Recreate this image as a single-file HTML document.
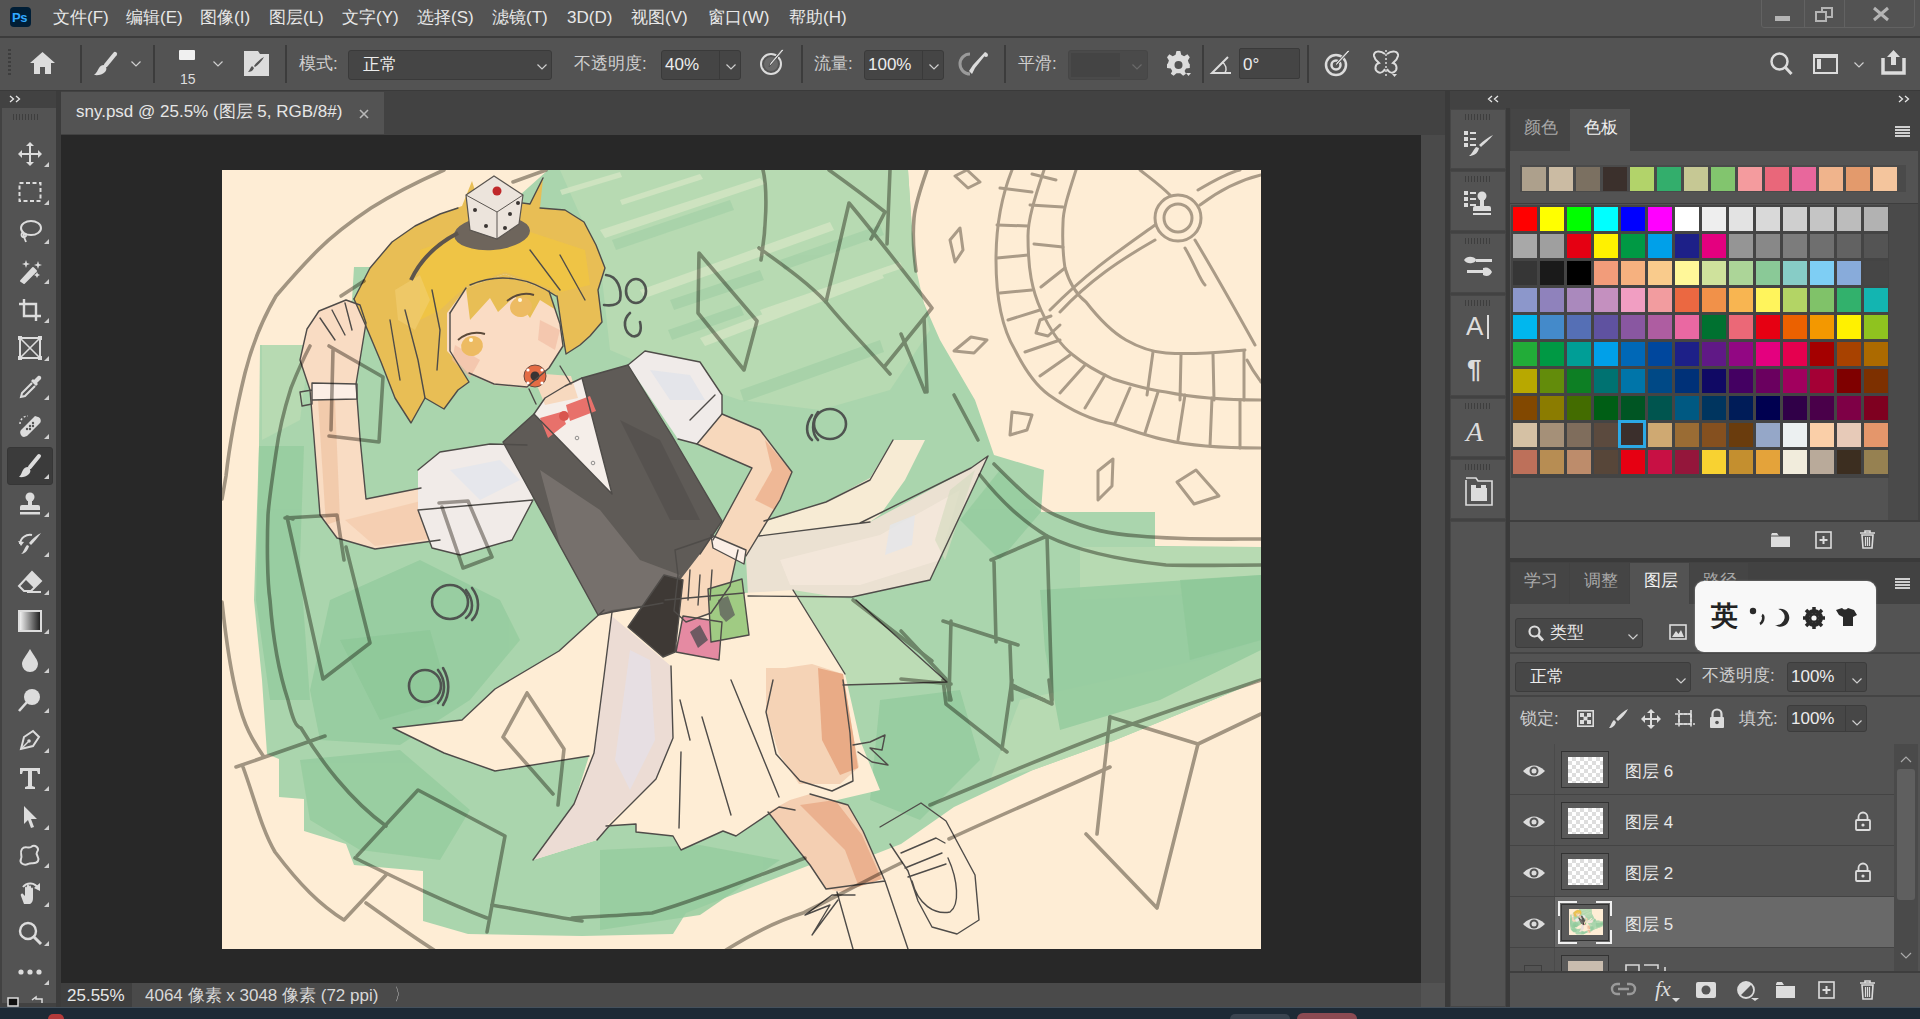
<!DOCTYPE html>
<html><head><meta charset="utf-8">
<style>
*{margin:0;padding:0;box-sizing:border-box}
html,body{width:1920px;height:1019px;overflow:hidden;background:#535353;font-family:"Liberation Sans",sans-serif;color:#d6d6d6}
.a{position:absolute}
.t{position:absolute;white-space:nowrap;line-height:1}
.ic{position:absolute;overflow:visible}
</style></head><body>

<div class="a" style="left:0px;top:0px;width:1920px;height:36px;background:#535353;"></div>
<div class="a" style="left:0px;top:36px;width:1920px;height:2px;background:#3c3c3c;"></div>
<div class="a" style="left:10px;top:7px;width:21px;height:20px;background:#001e36;border-radius:4px"></div>
<div class="t" style="left:12px;top:11px;font-size:13px;color:#31a8ff;font-weight:bold;letter-spacing:-0.3px">Ps</div>
<div class="t" style="left:53px;top:9px;font-size:17px;color:#e8e8e8;">文件(F)</div>
<div class="t" style="left:126px;top:9px;font-size:17px;color:#e8e8e8;">编辑(E)</div>
<div class="t" style="left:200px;top:9px;font-size:17px;color:#e8e8e8;">图像(I)</div>
<div class="t" style="left:269px;top:9px;font-size:17px;color:#e8e8e8;">图层(L)</div>
<div class="t" style="left:342px;top:9px;font-size:17px;color:#e8e8e8;">文字(Y)</div>
<div class="t" style="left:417px;top:9px;font-size:17px;color:#e8e8e8;">选择(S)</div>
<div class="t" style="left:492px;top:9px;font-size:17px;color:#e8e8e8;">滤镜(T)</div>
<div class="t" style="left:567px;top:9px;font-size:17px;color:#e8e8e8;">3D(D)</div>
<div class="t" style="left:631px;top:9px;font-size:17px;color:#e8e8e8;">视图(V)</div>
<div class="t" style="left:708px;top:9px;font-size:17px;color:#e8e8e8;">窗口(W)</div>
<div class="t" style="left:789px;top:9px;font-size:17px;color:#e8e8e8;">帮助(H)</div>
<div class="a" style="left:1761px;top:-4px;width:154px;height:32px;border:1px solid #626262;border-radius:3px"></div>
<div class="a" style="left:1804px;top:0px;width:1px;height:27px;background:#626262;"></div>
<div class="a" style="left:1844px;top:0px;width:1px;height:27px;background:#626262;"></div>
<div class="a" style="left:1775px;top:16px;width:15px;height:5px;background:#b4b4b4;"></div>
<div class="a" style="left:1821px;top:7px;width:12px;height:11px;border:2px solid #b4b4b4"></div>
<div class="a" style="left:1815px;top:11px;width:12px;height:11px;border:2px solid #b4b4b4;background:#535353"></div>
<svg class="ic" style="left:1872px;top:7px;" width="18" height="14" viewBox="0 0 18 14"><path d="M2 1 L16 13 M16 1 L2 13" stroke="#b4b4b4" stroke-width="3"/></svg>
<div class="a" style="left:0px;top:38px;width:1918px;height:52px;background:#535353;"></div>
<div class="a" style="left:0px;top:90px;width:1920px;height:1px;background:#3a3a3a;"></div>
<div class="a" style="left:8px;top:49px;width:3px;height:2px;background:#3e3e3e;"></div>
<div class="a" style="left:8px;top:53px;width:3px;height:2px;background:#3e3e3e;"></div>
<div class="a" style="left:8px;top:57px;width:3px;height:2px;background:#3e3e3e;"></div>
<div class="a" style="left:8px;top:61px;width:3px;height:2px;background:#3e3e3e;"></div>
<div class="a" style="left:8px;top:65px;width:3px;height:2px;background:#3e3e3e;"></div>
<div class="a" style="left:8px;top:69px;width:3px;height:2px;background:#3e3e3e;"></div>
<div class="a" style="left:8px;top:73px;width:3px;height:2px;background:#3e3e3e;"></div>
<div class="a" style="left:80px;top:45px;width:2px;height:38px;background:#3c3c3c;"></div>
<div class="a" style="left:153px;top:45px;width:2px;height:38px;background:#3c3c3c;"></div>
<div class="a" style="left:285px;top:45px;width:2px;height:38px;background:#3c3c3c;"></div>
<div class="a" style="left:801px;top:45px;width:2px;height:38px;background:#3c3c3c;"></div>
<div class="a" style="left:1004px;top:45px;width:2px;height:38px;background:#3c3c3c;"></div>
<div class="a" style="left:1202px;top:45px;width:2px;height:38px;background:#3c3c3c;"></div>
<div class="a" style="left:1307px;top:45px;width:2px;height:38px;background:#3c3c3c;"></div>
<svg class="ic" style="left:30px;top:52px;" width="25" height="22" viewBox="0 0 25 22"><path d="M12.5 0 L25 11 L21 11 L21 22 L15 22 L15 15 L10 15 L10 22 L4 22 L4 11 L0 11 Z" fill="#dcdcdc"/></svg>
<svg class="ic" style="left:94px;top:52px;" width="23" height="24" viewBox="0 0 23 24"><path d="M21 2 L12 13" stroke="#dcdcdc" stroke-width="4.2" stroke-linecap="round"/><path d="M9.5 13 C12.5 14 13.5 17.5 11 20 C8 23 4 23.5 0 23 C3 21 3.5 18 5 16 C6 14 8 13 9.5 13 Z" fill="#dcdcdc"/></svg>
<svg class="ic" style="left:131px;top:61px;" width="10" height="6" viewBox="0 0 10 6"><path d="M0.5 0.5 L5.0 5 L9.5 0.5" fill="none" stroke="#cfcfcf" stroke-width="1.2"/></svg>
<div class="a" style="left:179px;top:50px;width:16px;height:10px;background:#f0f0f0;border-radius:1px"></div>
<div class="t" style="left:180px;top:72px;font-size:14px;color:#dedede;">15</div>
<svg class="ic" style="left:213px;top:61px;" width="10" height="6" viewBox="0 0 10 6"><path d="M0.5 0.5 L5.0 5 L9.5 0.5" fill="none" stroke="#cfcfcf" stroke-width="1.2"/></svg>
<svg class="ic" style="left:244px;top:51px;" width="25" height="25" viewBox="0 0 25 25"><path d="M0 0 H14 L16 3 H25 V25 H0 Z" fill="#dcdcdc"/><path d="M20 6 C18 10 14 14 11 16 L10 15 C12 12 16 8 20 6 Z M10 17 C9 20 6 21 4 21 C6 19 6 17 8 15 Z" fill="#535353"/></svg>
<div class="t" style="left:299px;top:55px;font-size:17px;color:#cfcfcf;">模式:</div>
<div class="a" style="left:348px;top:50px;width:204px;height:30px;background:#454545;border:1px solid #3a3a3a;border-radius:3px"></div>
<div class="t" style="left:363px;top:56px;font-size:17px;color:#ececec;">正常</div>
<svg class="ic" style="left:537px;top:64px;" width="10" height="6" viewBox="0 0 10 6"><path d="M0.5 0.5 L5.0 5 L9.5 0.5" fill="none" stroke="#cfcfcf" stroke-width="1.2"/></svg>
<div class="t" style="left:574px;top:55px;font-size:17px;color:#cfcfcf;">不透明度:</div>
<div class="a" style="left:661px;top:50px;width:80px;height:30px;background:#454545;border:1px solid #3a3a3a;border-radius:3px"></div>
<div class="a" style="left:719px;top:51px;width:1px;height:28px;background:#3a3a3a;"></div>
<div class="t" style="left:665px;top:56px;font-size:17px;color:#ececec;">40%</div>
<svg class="ic" style="left:726px;top:64px;" width="10" height="6" viewBox="0 0 10 6"><path d="M0.5 0.5 L5.0 5 L9.5 0.5" fill="none" stroke="#cfcfcf" stroke-width="1.2"/></svg>
<svg class="ic" style="left:759px;top:49px;" width="27" height="27" viewBox="0 0 27 27"><circle cx="12" cy="15" r="10" fill="none" stroke="#dcdcdc" stroke-width="2"/><circle cx="12" cy="15" r="7" fill="#6a6a6a"/><path d="M25 1 L12 16 L10 18 L11 14 L23 0 Z" fill="#dcdcdc" stroke="#535353" stroke-width="1"/></svg>
<div class="t" style="left:814px;top:55px;font-size:17px;color:#cfcfcf;">流量:</div>
<div class="a" style="left:864px;top:50px;width:80px;height:30px;background:#454545;border:1px solid #3a3a3a;border-radius:3px"></div>
<div class="a" style="left:922px;top:51px;width:1px;height:28px;background:#3a3a3a;"></div>
<div class="t" style="left:868px;top:56px;font-size:17px;color:#ececec;">100%</div>
<svg class="ic" style="left:929px;top:64px;" width="10" height="6" viewBox="0 0 10 6"><path d="M0.5 0.5 L5.0 5 L9.5 0.5" fill="none" stroke="#cfcfcf" stroke-width="1.2"/></svg>
<svg class="ic" style="left:961px;top:52px;" width="28" height="24" viewBox="0 0 28 24"><path d="M9 2 A10 10 0 0 0 9 22" fill="none" stroke="#9a9a9a" stroke-width="3"/><path d="M26 1 L14 16 L11 22 L8 19 L12 13 L24 0 Z" fill="#dcdcdc"/><circle cx="25" cy="3" r="2" fill="#dcdcdc"/></svg>
<div class="t" style="left:1018px;top:55px;font-size:17px;color:#cfcfcf;">平滑:</div>
<div class="a" style="left:1068px;top:50px;width:80px;height:30px;background:#4a4a4a;border:1px solid #464646;border-radius:3px"></div>
<div class="a" style="left:1071px;top:53px;width:49px;height:24px;background:#444444;"></div>
<svg class="ic" style="left:1132px;top:64px;" width="10" height="6" viewBox="0 0 10 6"><path d="M0.5 0.5 L5.0 5 L9.5 0.5" fill="none" stroke="#6a6a6a" stroke-width="1.2"/></svg>
<svg class="ic" style="left:1167px;top:51px;" width="24" height="26" viewBox="0 0 24 26"><path d="M10 0 H14 L15 4 L18 5.5 L21.5 3.5 L24 6.5 L22 10 L23 13 L24 14 V18 L20 18.5 L18.5 21 L20 24 L17 26 L14 23.5 H10 L7 26 L4 24 L5.5 21 L4 18.5 L0 18 V14 L1 13 L2 10 L0 6.5 L2.5 3.5 L6 5.5 L9 4 Z" fill="#dcdcdc" transform="scale(0.95)"/><circle cx="11.5" cy="14" r="4" fill="#535353"/><path d="M19 22 L24 22 L21.5 25 Z" fill="#dcdcdc"/></svg>
<svg class="ic" style="left:1211px;top:54px;" width="22" height="20" viewBox="0 0 22 20"><path d="M20 19 H1 L17 3" fill="none" stroke="#dcdcdc" stroke-width="2"/><path d="M11 8 A8 8 0 0 1 14 19" fill="none" stroke="#dcdcdc" stroke-width="1.5"/></svg>
<div class="a" style="left:1239px;top:48px;width:61px;height:31px;background:#454545;border:1px solid #3a3a3a;border-radius:2px"></div>
<div class="t" style="left:1243px;top:56px;font-size:17px;color:#ececec;">0°</div>
<svg class="ic" style="left:1324px;top:50px;" width="28" height="27" viewBox="0 0 28 27"><circle cx="12" cy="15" r="10" fill="none" stroke="#dcdcdc" stroke-width="2.5"/><circle cx="12" cy="15" r="4.5" fill="none" stroke="#dcdcdc" stroke-width="2.5"/><path d="M26 1 L13 15 L11 16 L12 13 L24 0 Z" fill="#dcdcdc" stroke="#535353" stroke-width="1"/></svg>
<svg class="ic" style="left:1372px;top:50px;" width="28" height="28" viewBox="0 0 28 28"><path d="M13 4 C8 0 1 1 2 6 C3 10 5 11 7 13 C3 14 2 20 6 22 C9 24 12 21 13 19 M15 4 C20 0 27 1 26 6 C25 10 23 11 21 13 C25 14 26 20 22 22 C19 24 16 21 15 19" fill="none" stroke="#dcdcdc" stroke-width="2"/><path d="M14 0 V27" stroke="#dcdcdc" stroke-width="1.5" stroke-dasharray="2 2"/><path d="M20 24 L25 24 L22.5 27 Z" fill="#dcdcdc"/></svg>
<svg class="ic" style="left:1770px;top:52px;" width="23" height="24" viewBox="0 0 23 24"><circle cx="9.5" cy="9.5" r="8" fill="none" stroke="#dcdcdc" stroke-width="2.5"/><path d="M15 15 L21.5 22" stroke="#dcdcdc" stroke-width="3"/></svg>
<svg class="ic" style="left:1813px;top:54px;" width="25" height="20" viewBox="0 0 25 20"><rect x="1" y="1" width="23" height="18" fill="none" stroke="#dcdcdc" stroke-width="2"/><rect x="1" y="1" width="23" height="3" fill="#dcdcdc"/><rect x="4" y="5" width="4" height="10" fill="#dcdcdc"/></svg>
<svg class="ic" style="left:1854px;top:62px;" width="10" height="6" viewBox="0 0 10 6"><path d="M0.5 0.5 L5.0 5 L9.5 0.5" fill="none" stroke="#cfcfcf" stroke-width="1.2"/></svg>
<svg class="ic" style="left:1880px;top:50px;" width="27" height="25" viewBox="0 0 27 25"><path d="M3 8 V23 H24 V8" fill="none" stroke="#dcdcdc" stroke-width="3.5"/><path d="M13.5 0 L20 7 H16 V15 H11 V7 H7 Z" fill="#dcdcdc"/></svg>
<div class="a" style="left:0px;top:91px;width:1920px;height:916px;background:#424242;"></div>
<div class="a" style="left:0px;top:91px;width:57px;height:17px;background:#424242;"></div>
<div class="a" style="left:2px;top:108px;width:54px;height:895px;background:#535353;"></div>
<div class="a" style="left:56px;top:91px;width:5px;height:916px;background:#3c3c3c;"></div>
<div class="a" style="left:13px;top:114px;width:1px;height:6px;background:#3e3e3e;"></div>
<div class="a" style="left:16px;top:114px;width:1px;height:6px;background:#3e3e3e;"></div>
<div class="a" style="left:19px;top:114px;width:1px;height:6px;background:#3e3e3e;"></div>
<div class="a" style="left:22px;top:114px;width:1px;height:6px;background:#3e3e3e;"></div>
<div class="a" style="left:25px;top:114px;width:1px;height:6px;background:#3e3e3e;"></div>
<div class="a" style="left:28px;top:114px;width:1px;height:6px;background:#3e3e3e;"></div>
<div class="a" style="left:31px;top:114px;width:1px;height:6px;background:#3e3e3e;"></div>
<div class="a" style="left:34px;top:114px;width:1px;height:6px;background:#3e3e3e;"></div>
<div class="a" style="left:37px;top:114px;width:1px;height:6px;background:#3e3e3e;"></div>
<div class="a" style="left:7px;top:447px;width:46px;height:38px;background:#3b3b3b;border-radius:3px;border:1px solid #363636"></div>
<svg class="ic" style="left:18px;top:142px;" width="24" height="24" viewBox="0 0 24 24"><path d="M12 0 L16 4 H13 V11 H20 V8 L24 12 L20 16 V13 H13 V20 H16 L12 24 L8 20 H11 V13 H4 V16 L0 12 L4 8 V11 H11 V4 H8 Z" fill="#dcdcdc"/></svg>
<svg class="ic" style="left:44px;top:162px;" width="5" height="5" viewBox="0 0 5 5"><path d="M5 0 V5 H0 Z" fill="#cfcfcf"/></svg>
<svg class="ic" style="left:18px;top:180px;" width="24" height="24" viewBox="0 0 24 24"><rect x="1.5" y="3" width="21" height="18" fill="none" stroke="#dcdcdc" stroke-width="2" stroke-dasharray="4 2.5"/></svg>
<svg class="ic" style="left:44px;top:200px;" width="5" height="5" viewBox="0 0 5 5"><path d="M5 0 V5 H0 Z" fill="#cfcfcf"/></svg>
<svg class="ic" style="left:18px;top:219px;" width="24" height="24" viewBox="0 0 24 24"><ellipse cx="13" cy="9" rx="10" ry="7" fill="none" stroke="#dcdcdc" stroke-width="2"/><path d="M5 13 C2 16 4 19 7 18 C9 17 8 14 6 15 C5 17 7 20 8 23" fill="none" stroke="#dcdcdc" stroke-width="1.8"/></svg>
<svg class="ic" style="left:44px;top:239px;" width="5" height="5" viewBox="0 0 5 5"><path d="M5 0 V5 H0 Z" fill="#cfcfcf"/></svg>
<svg class="ic" style="left:18px;top:259px;" width="24" height="24" viewBox="0 0 24 24"><path d="M3 22 L15 9 L18 12 L6 24 Z" fill="#dcdcdc" stroke="#dcdcdc" stroke-width="2" stroke-linejoin="round"/><path d="M8 1 L9 4 L12 5 L9 6 L8 9 L7 6 L4 5 L7 4 Z M20 2 L21 5 L24 6 L21 7 L20 10 L19 7 L16 6 L19 5 Z M19 13 L20 15 L22 16 L20 17 L19 19 L18 17 L16 16 L18 15 Z" fill="#dcdcdc"/></svg>
<svg class="ic" style="left:44px;top:279px;" width="5" height="5" viewBox="0 0 5 5"><path d="M5 0 V5 H0 Z" fill="#cfcfcf"/></svg>
<svg class="ic" style="left:18px;top:298px;" width="24" height="24" viewBox="0 0 24 24"><path d="M6 1 V18 H23 M1 6 H18 V23" fill="none" stroke="#dcdcdc" stroke-width="2.4"/></svg>
<svg class="ic" style="left:44px;top:318px;" width="5" height="5" viewBox="0 0 5 5"><path d="M5 0 V5 H0 Z" fill="#cfcfcf"/></svg>
<svg class="ic" style="left:18px;top:336px;" width="24" height="24" viewBox="0 0 24 24"><rect x="2" y="2" width="20" height="20" fill="none" stroke="#dcdcdc" stroke-width="2"/><path d="M2 2 L22 22 M22 2 L2 22" stroke="#dcdcdc" stroke-width="1.6"/><g fill="#dcdcdc"><rect x="0" y="0" width="4" height="4"/><rect x="20" y="0" width="4" height="4"/><rect x="0" y="20" width="4" height="4"/><rect x="20" y="20" width="4" height="4"/></g></svg>
<svg class="ic" style="left:44px;top:356px;" width="5" height="5" viewBox="0 0 5 5"><path d="M5 0 V5 H0 Z" fill="#cfcfcf"/></svg>
<svg class="ic" style="left:18px;top:375px;" width="24" height="24" viewBox="0 0 24 24"><path d="M20 1 C22 0 24 2 23 4 L19 8 L20 9 L18 11 L13 6 L15 4 L16 5 Z" fill="#dcdcdc"/><path d="M14 8 L4 18 L3 22 L7 21 L17 11" fill="none" stroke="#dcdcdc" stroke-width="2"/></svg>
<svg class="ic" style="left:44px;top:395px;" width="5" height="5" viewBox="0 0 5 5"><path d="M5 0 V5 H0 Z" fill="#cfcfcf"/></svg>
<svg class="ic" style="left:18px;top:414px;" width="24" height="24" viewBox="0 0 24 24"><path d="M9 22 L22 9 C24 7 22 3 20 3 L17 2 L3 16 C1 18 3 23 6 23 Z" fill="#dcdcdc"/><g fill="#535353"><circle cx="12" cy="12" r="1.2"/><circle cx="15" cy="12" r="1.2"/><circle cx="12" cy="15" r="1.2"/><circle cx="15" cy="9" r="1.2"/><circle cx="9" cy="15" r="1.2"/></g><path d="M2 10 A8 8 0 0 1 10 2" fill="none" stroke="#dcdcdc" stroke-width="1.5" stroke-dasharray="2 2"/></svg>
<svg class="ic" style="left:44px;top:434px;" width="5" height="5" viewBox="0 0 5 5"><path d="M5 0 V5 H0 Z" fill="#cfcfcf"/></svg>
<svg class="ic" style="left:18px;top:454px;" width="24" height="24" viewBox="0 0 24 24"><path d="M21 2 L12 13" stroke="#dcdcdc" stroke-width="4" stroke-linecap="round"/><path d="M9.5 13 C12.5 14 13.5 17.5 11 20 C8 23 4 23.5 1 23 C3.5 21 3.5 18 5 16 C6 14 8 13 9.5 13 Z" fill="#dcdcdc"/></svg>
<svg class="ic" style="left:44px;top:474px;" width="5" height="5" viewBox="0 0 5 5"><path d="M5 0 V5 H0 Z" fill="#cfcfcf"/></svg>
<svg class="ic" style="left:18px;top:492px;" width="24" height="24" viewBox="0 0 24 24"><circle cx="12" cy="5" r="4.5" fill="#dcdcdc"/><path d="M10 8 H14 V13 H20 Q22 13 22 15 V18 H2 V15 Q2 13 4 13 H10 Z" fill="#dcdcdc"/><rect x="2" y="20" width="20" height="2.5" fill="#dcdcdc"/></svg>
<svg class="ic" style="left:44px;top:512px;" width="5" height="5" viewBox="0 0 5 5"><path d="M5 0 V5 H0 Z" fill="#cfcfcf"/></svg>
<svg class="ic" style="left:18px;top:532px;" width="24" height="24" viewBox="0 0 24 24"><path d="M23 1 C20 5 16 10 13 13 L11 11 C14 7 19 3 23 1 Z M11 14 C10 19 6 22 3 22 C6 20 6 16 9 13 Z" fill="#dcdcdc"/><path d="M2 12 A10 10 0 0 1 14 3" fill="none" stroke="#dcdcdc" stroke-width="2"/><path d="M0 9 L3 14 L6 10 Z" fill="#dcdcdc"/></svg>
<svg class="ic" style="left:44px;top:552px;" width="5" height="5" viewBox="0 0 5 5"><path d="M5 0 V5 H0 Z" fill="#cfcfcf"/></svg>
<svg class="ic" style="left:18px;top:570px;" width="24" height="24" viewBox="0 0 24 24"><path d="M14 2 L23 11 L13 21 H6 L1 16 Z" fill="none" stroke="#dcdcdc" stroke-width="2"/><path d="M14 2 L23 11 L16 18 L7 9 Z" fill="#dcdcdc"/><path d="M9 22 H23" stroke="#dcdcdc" stroke-width="2"/></svg>
<svg class="ic" style="left:44px;top:590px;" width="5" height="5" viewBox="0 0 5 5"><path d="M5 0 V5 H0 Z" fill="#cfcfcf"/></svg>
<div class="a" style="left:18px;top:610px;width:24px;height:22px;border:2px solid #dcdcdc;background:linear-gradient(90deg,#f0f0f0,#222)"></div>
<svg class="ic" style="left:44px;top:629px;" width="5" height="5" viewBox="0 0 5 5"><path d="M5 0 V5 H0 Z" fill="#cfcfcf"/></svg>
<svg class="ic" style="left:18px;top:648px;" width="24" height="24" viewBox="0 0 24 24"><path d="M12 1 C16 8 20 12 20 16 A8 8 0 0 1 4 16 C4 12 8 8 12 1 Z" fill="#dcdcdc"/></svg>
<svg class="ic" style="left:44px;top:668px;" width="5" height="5" viewBox="0 0 5 5"><path d="M5 0 V5 H0 Z" fill="#cfcfcf"/></svg>
<svg class="ic" style="left:18px;top:688px;" width="24" height="24" viewBox="0 0 24 24"><circle cx="14" cy="9" r="8" fill="#dcdcdc"/><path d="M9 14 L1 23" stroke="#dcdcdc" stroke-width="2.6"/></svg>
<svg class="ic" style="left:44px;top:708px;" width="5" height="5" viewBox="0 0 5 5"><path d="M5 0 V5 H0 Z" fill="#cfcfcf"/></svg>
<svg class="ic" style="left:18px;top:728px;" width="24" height="24" viewBox="0 0 24 24"><path d="M3 21 L6 9 L15 3 L21 9 L15 18 Z" fill="none" stroke="#dcdcdc" stroke-width="2"/><path d="M3 21 L10 14" stroke="#dcdcdc" stroke-width="1.5"/><circle cx="11" cy="13" r="1.8" fill="#dcdcdc"/></svg>
<svg class="ic" style="left:44px;top:748px;" width="5" height="5" viewBox="0 0 5 5"><path d="M5 0 V5 H0 Z" fill="#cfcfcf"/></svg>
<svg class="ic" style="left:18px;top:766px;" width="24" height="24" viewBox="0 0 24 24"><path d="M2 2 H22 V8 H20 L19 5 H14 V20 L17 21 V23 H7 V21 L10 20 V5 H5 L4 8 H2 Z" fill="#dcdcdc"/></svg>
<svg class="ic" style="left:44px;top:786px;" width="5" height="5" viewBox="0 0 5 5"><path d="M5 0 V5 H0 Z" fill="#cfcfcf"/></svg>
<svg class="ic" style="left:18px;top:805px;" width="24" height="24" viewBox="0 0 24 24"><path d="M6 1 L19 14 L13 14 L16 22 L13 23 L10 15 L6 19 Z" fill="#dcdcdc"/></svg>
<svg class="ic" style="left:44px;top:825px;" width="5" height="5" viewBox="0 0 5 5"><path d="M5 0 V5 H0 Z" fill="#cfcfcf"/></svg>
<svg class="ic" style="left:18px;top:843px;" width="24" height="24" viewBox="0 0 24 24"><path d="M4 6 C7 2 10 6 13 4 C17 1 22 5 19 9 C17 12 22 14 20 18 C18 22 13 19 10 21 C6 23 1 20 3 16 C5 13 1 10 4 6 Z" fill="none" stroke="#dcdcdc" stroke-width="2"/></svg>
<svg class="ic" style="left:44px;top:863px;" width="5" height="5" viewBox="0 0 5 5"><path d="M5 0 V5 H0 Z" fill="#cfcfcf"/></svg>
<svg class="ic" style="left:18px;top:882px;" width="24" height="24" viewBox="0 0 24 24"><path d="M6 22 L3 14 C2 12 4 11 5 12 L7 14 V6 C7 4 9 4 9 6 V11 V4 C9 2 11 2 11 4 V11 V5 C11 3 13 3 13 5 V11 V7 C13 5 15 5 15 7 V16 C15 20 13 22 11 22 Z" fill="#dcdcdc"/><path d="M5 5 A9 9 0 0 1 20 6" fill="none" stroke="#dcdcdc" stroke-width="2"/><path d="M22 1 L22 9 L16 6 Z" fill="#dcdcdc"/></svg>
<svg class="ic" style="left:44px;top:902px;" width="5" height="5" viewBox="0 0 5 5"><path d="M5 0 V5 H0 Z" fill="#cfcfcf"/></svg>
<svg class="ic" style="left:18px;top:921px;" width="24" height="24" viewBox="0 0 24 24"><circle cx="10" cy="10" r="8" fill="none" stroke="#dcdcdc" stroke-width="2.4"/><path d="M16 16 L23 23" stroke="#dcdcdc" stroke-width="3"/></svg>
<svg class="ic" style="left:44px;top:941px;" width="5" height="5" viewBox="0 0 5 5"><path d="M5 0 V5 H0 Z" fill="#cfcfcf"/></svg>
<svg class="ic" style="left:18px;top:969px;" width="24" height="6" viewBox="0 0 24 6"><circle cx="3" cy="3" r="2.6" fill="#dcdcdc"/><circle cx="12" cy="3" r="2.6" fill="#dcdcdc"/><circle cx="21" cy="3" r="2.6" fill="#dcdcdc"/></svg>
<svg class="ic" style="left:44px;top:980px;" width="5" height="5" viewBox="0 0 5 5"><path d="M5 0 V5 H0 Z" fill="#cfcfcf"/></svg>
<svg class="ic" style="left:6px;top:997px;" width="40" height="6" viewBox="0 0 40 6"><rect x="2" y="1" width="10" height="8" fill="#111" stroke="#dcdcdc" stroke-width="1.5"/><path d="M26 3 L30 0 V2 H36 V6" fill="none" stroke="#dcdcdc" stroke-width="1.5"/></svg>
<svg class="ic" style="left:9px;top:95px;" width="14" height="8" viewBox="0 0 14 8"><path d="M1 1 L4.5 4 L1 7 M7 1 L10.5 4 L7 7" fill="none" stroke="#e6e6e6" stroke-width="1.3"/></svg>
<div class="a" style="left:61px;top:91px;width:1384px;height:44px;background:#424242;"></div>
<div class="a" style="left:61px;top:92px;width:323px;height:42px;background:#535353;"></div>
<div class="t" style="left:76px;top:103px;font-size:17px;color:#e6e6e6;">sny.psd @ 25.5% (图层 5, RGB/8#)</div>
<svg class="ic" style="left:359px;top:109px;" width="10" height="10" viewBox="0 0 10 10"><path d="M1 1 L9 9 M9 1 L1 9" stroke="#b8b8b8" stroke-width="1.6"/></svg>
<div class="a" style="left:61px;top:135px;width:1360px;height:848px;background:#282828;"></div>
<div class="a" style="left:1421px;top:135px;width:24px;height:848px;background:#4a4a4a;"></div>
<div class="a" style="left:61px;top:983px;width:1360px;height:24px;background:#4a4a4a;"></div>
<div class="a" style="left:1421px;top:983px;width:24px;height:24px;background:#535353;"></div>
<div class="a" style="left:61px;top:983px;width:71px;height:24px;background:#3f3f3f;"></div>
<div class="t" style="left:67px;top:987px;font-size:17px;color:#e8e8e8;">25.55%</div>
<div class="t" style="left:145px;top:987px;font-size:17px;color:#d8d8d8;">4064 像素 x 3048 像素 (72 ppi)</div>
<div class="t" style="left:392px;top:986px;font-size:17px;color:#cfcfcf;transform:scaleX(0.6)">〉</div>
<div class="a" style="left:408px;top:983px;width:1013px;height:24px;background:#4a4a4a;"></div>
<svg class="ic" style="left:222px;top:170px" width="1039" height="779" viewBox="222 170 1039 779">
<defs>
<clipPath id="cv"><rect x="222" y="170" width="1039" height="779"/></clipPath>
</defs>
<g clip-path="url(#cv)">
<rect x="222" y="170" width="1039" height="779" fill="#feedd5"/>
<g id="fills"><!-- GREEN main region -->
<path d="M548 170 L908 170 L912 230 L918 290 L940 340 L975 400 L994 455 L1044 470 L1041 512 L1155 512 L1155 546 L1261 547 L1261 680 L1179 714 L1113 741 L1033 770 L954 807 L901 844 L860 860 L810 865 L686 913 L673 934 L582 936 L468 934 L423 921 L423 871 L354 865 L346 844 L304 831 L304 799 L279 797 L279 759 L267 754 L262 680 L254 600 L259 446 L260 345 L310 345 L352 300 L354 267 L383 267 L420 240 L470 210 L520 195 Z" fill="#aad5ad"/>
<g fill="#b7dab2">
<path d="M560 170 L908 170 L914 260 L930 330 L890 390 L820 410 L740 400 L680 380 L610 350 L600 260 Z"/>
<path d="M1080 547 L1261 547 L1261 590 L1080 600 Z"/>
<path d="M1020 700 L1200 660 L1261 640 L1261 680 L1179 714 L1113 741 L1033 770 L990 780 Z"/>
<path d="M262 345 L310 345 L300 420 L262 440 Z"/>
</g>
<g fill="#a2d0a6" opacity="0.7">
<path d="M612 240 L730 200 L734 210 L616 250 Z"/>
<path d="M670 300 L760 270 L764 280 L674 310 Z"/>
<path d="M668 330 L740 305 L744 315 L672 340 Z"/>
<path d="M740 390 L880 340 L884 352 L744 402 Z"/>
<path d="M780 260 L880 225 L884 235 L784 270 Z"/>
</g>
<g fill="#d4e6c4" opacity="0.8">
<path d="M760 310 L900 262 L903 268 L763 316 Z"/>
<path d="M560 190 L620 172 L622 177 L562 195 Z"/>
<path d="M600 230 L760 178 L765 184 L605 238 Z"/>
<path d="M640 290 L830 222 L834 230 L645 298 Z"/>
<path d="M700 338 L880 270 L884 278 L705 346 Z"/>
<path d="M620 200 L700 174 L703 179 L622 205 Z"/>
</g>
<g fill="#96cc9f" opacity="0.85">
<path d="M259 446 L304 446 L300 560 L310 700 L270 700 L256 600 Z"/>
<path d="M330 600 L420 560 L500 600 L520 640 L470 700 L400 745 L320 740 L310 690 Z"/>
<path d="M300 760 L400 750 L470 810 L440 860 L360 850 L310 820 Z"/>
<path d="M600 850 L700 845 L780 860 L700 915 L600 930 Z"/>
<path d="M1040 590 L1261 575 L1261 650 L1160 700 L1060 730 L1045 650 Z"/>
<path d="M1000 470 L1041 512 L1000 560 L960 520 Z"/>
<path d="M880 700 L960 690 L980 760 L920 820 L870 800 Z"/>
</g>
<g fill="#8bc796" opacity="0.6">
<path d="M1180 580 L1261 575 L1261 640 L1190 660 Z"/>
<path d="M340 640 L430 630 L450 700 L380 720 Z"/>
</g>

<!-- left long ribbon + left ribbon -->
<path d="M604 610 L559 651 L495 689 L462 720 L393 728 L444 753 L495 771 L589 756 L574 804 L533 860 L597 840 L610 825 L656 779 L673 738 L671 666 L665 640 Z" fill="#feedd5"/>
<path d="M612 612 L604 676 L594 753 L574 804 L533 860 L597 840 L610 825 L656 779 L673 738 L671 666 Z" fill="#ecdcd4"/>
<path d="M630 650 L650 660 L655 740 L630 790 L615 760 Z" fill="#e6e0e6" opacity="0.8"/>
<!-- right ribbon -->
<path d="M766 521 L826 502 L870 478 L893 440 L925 440 L905 480 L880 515 L870 522 L759 536 Z" fill="#fbecd6" opacity="0.95"/>
<path d="M745 540 L759 536 L870 522 L971 468 L988 456 L930 580 L852 597 L748 596 Z" fill="#eee2d4" opacity="0.95"/>
<path d="M780 560 L880 535 L960 490 L940 560 L860 585 L790 585 Z" fill="#f5e9dc" opacity="0.8"/>
<path d="M890 525 L915 515 L912 545 L885 555 Z" fill="#e4e6ea" opacity="0.8"/>
<path d="M950 490 L975 470 L945 560 L935 540 Z" fill="#d6dcc0" opacity="0.7"/>
<path d="M793 590 L856 600 L947 682 L843 685 Z" fill="#bcdcb5"/>
<path d="M760 890 L815 868 L890 853 L945 821 L1000 784 L980 770 L930 760 L880 700 L860 740 L858 800 L790 815 Z" fill="#c3ddb5" opacity="0.0"/>
<!-- skirt -->
<path d="M607 612 L665 600 L744 593 L793 590 L845 674 L860 740 L880 790 L795 810 L780 807 L736 836 L723 831 L681 850 L673 836 L636 832 L636 824 L606 826 L656 779 L673 738 L671 666 Z" fill="#feedd5"/>
<!-- legs -->
<path d="M766 668 L785 668 L812 664 L843 674 L854 740 L859 767 L840 784 L799 784 L779 754 L766 712 Z" fill="#f5d3b6"/>
<path d="M818 668 L843 674 L854 740 L858 768 L840 775 L822 740 Z" fill="#e9ab86"/>
<path d="M768 812 L790 800 L810 794 L848 805 L863 831 L885 881 L860 895 L826 889 L810 865 Z" fill="#f4cfb2"/>
<path d="M800 805 L835 800 L862 835 L882 880 L860 890 L845 850 Z" fill="#e9ab88" opacity="0.85"/>
<path d="M834 895 L888 877 L908 949 L853 949 Z" fill="#feedd5"/>
<!-- shoe -->


<!-- left arm -->
<path d="M307 329 L319 311 L346 300 L360 305 L366 323 L356 384 L360 438 L366 499 L421 488 L440 540 L375 549 L337 538 L320 515 L314 438 L310 390 L300 360 Z" fill="#f9dcc3"/>
<path d="M318 400 L335 400 L340 520 L326 525 Z" fill="#f0c3a3" opacity="0.7"/>
<path d="M345 520 L425 500 L437 538 L375 546 Z" fill="#f2c6a6" opacity="0.6"/>
<path d="M312 383 L357 384 L357 399 L312 400 Z" fill="#fcefe6"/>
<!-- left sleeve -->
<path d="M418 470 L440 452 L490 444 L527 445 L533 500 L512 540 L460 555 L432 548 L418 510 Z" fill="#f1ebe8"/>
<path d="M450 470 L500 460 L520 480 L480 500 Z" fill="#e4e6ec" opacity="0.8"/>
<!-- right arm -->
<path d="M697 444 L722 414 L760 430 L792 472 L780 500 L746 556 L713 540 L752 468 Z" fill="#f7d8bc"/>
<path d="M765 440 L792 472 L775 510 L755 500 L772 470 Z" fill="#ecae8a" opacity="0.75"/>
<!-- right hand -->
<path d="M675 550 L713 537 L738 550 L730 586 L711 613 L686 622 L674 611 L678 575 Z" fill="#f8d8bc"/>
<path d="M711 535 L746 550 L744 564 L713 548 Z" fill="#fcefe6"/>
<!-- vest -->
<path d="M503 442 L534 414 L612 494 L582 378 L628 365 L672 436 L722 521 L700 554 L680 580 L660 605 L612 612 L598 615 Z" fill="#5f5b57"/>
<path d="M540 470 L600 510 L640 560 L680 575 L660 603 L612 610 L598 615 L560 545 Z" fill="#857f79" opacity="0.6"/>
<path d="M620 420 L660 440 L700 520 L670 520 Z" fill="#504c49" opacity="0.6"/>
<!-- shirt -->
<path d="M534 414 L545 398 L565 386 L582 378 L612 494 Z" fill="#f5eee9"/>
<path d="M532 373 L571 376 L578 398 L545 405 Z" fill="#f7d9bf"/>
<!-- right sleeve -->
<path d="M628 365 L645 351 L700 362 L722 395 L722 414 L697 444 L678 439 Z" fill="#f0ebe9"/>
<path d="M650 370 L690 375 L705 400 L670 400 Z" fill="#e1e4ea" opacity="0.8"/>
<!-- bow -->
<path d="M540 418 L561 412 L566 424 L548 438 Z" fill="#e8716b"/>
<path d="M566 405 L590 396 L596 411 L570 421 Z" fill="#e8716b"/>
<circle cx="564" cy="416" r="5" fill="#d9564f"/>
<circle cx="577" cy="438" r="1.8" fill="none" stroke="#777" stroke-width="0.8"/><circle cx="593" cy="463" r="1.8" fill="none" stroke="#777" stroke-width="0.8"/>

<!-- cards -->
<path d="M628 627 L664 575 L683 580 L675 652 L663 657 Z" fill="#3e3935"/>
<path d="M676 652 L683 616 L722 622 L719 660 Z" fill="#e58aa2"/>
<path d="M708 589 L742 579 L749 635 L711 642 Z" fill="#a0cb83"/>
<path d="M718 600 L728 596 L735 615 L726 622 L720 615 Z" fill="#6d7765"/>
<path d="M690 632 L700 625 L708 640 L698 648 Z" fill="#6e5a62"/>

<!-- hair -->
<path d="M354 299 L370 268 L392 242 L415 226 L440 214 L462 206 L472 181 L477 197 L530 204 L543 178 L540 208 L565 210 L584 222 L596 245 L605 268 L598 290 L602 322 L590 336 L580 345 L566 354 L562 330 L557 296 L549 291 L505 274 L466 288 L450 313 L450 351 L469 382 L458 390 L444 409 L425 398 L411 423 L395 398 L381 362 L365 324 Z" fill="#e8be55"/>
<path d="M420 250 L470 232 L530 232 L585 250 L590 285 L560 292 L505 272 L466 286 L440 310 L420 320 Z" fill="#f2c63f" opacity="0.7"/>
<path d="M395 290 L420 275 L430 300 L415 330 L398 320 Z" fill="#f3d27a" opacity="0.5"/>
<!-- face -->
<path d="M447 313 L466 288 L505 274 L549 291 L560 324 L563 346 L549 368 L527 388 L494 385 L469 374 L447 351 Z" fill="#fadcc4"/>
<path d="M455 345 L480 360 L470 378 L452 360 Z" fill="#f0b9a0" opacity="0.6"/>
<path d="M540 320 L560 330 L555 350 L538 340 Z" fill="#f0b9a0" opacity="0.6"/>
<path d="M466 288 L505 274 L549 291 L556 310 L540 300 L530 318 L515 296 L498 312 L490 298 L470 320 Z" fill="#e8be55"/>
<!-- eyes & chip -->
<ellipse cx="472" cy="346" rx="11" ry="10" fill="#edbb62" transform="rotate(-15 472 346)"/>
<path d="M458 340 Q470 330 485 334" fill="none" stroke="#5b4a3a" stroke-width="2"/>
<ellipse cx="521" cy="307" rx="11" ry="10" fill="#edbb62" transform="rotate(-15 521 307)"/>
<path d="M507 301 Q520 291 534 295" fill="none" stroke="#5b4a3a" stroke-width="2"/>
<circle cx="471" cy="340" r="2" fill="#fff8e0"/><circle cx="520" cy="300" r="2" fill="#fff8e0"/>
<circle cx="535" cy="376" r="11" fill="#e46c45" stroke="#6b4a40" stroke-width="1"/>
<circle cx="535" cy="376" r="4.5" fill="#3a3434"/>
<g fill="#fff"><circle cx="528" cy="370" r="1.6"/><circle cx="542" cy="370" r="1.6"/><circle cx="542" cy="383" r="1.6"/><circle cx="528" cy="383" r="1.6"/></g>

</g>
<!-- FIGURE OUTLINES -->
<g fill="none" stroke="#4f4c49" stroke-width="1.4" stroke-linejoin="round" stroke-linecap="round">
<path d="M354 299 L370 268 L392 242 L415 226 L440 214 L458 208 M477 197 L530 204 L543 178 M540 208 L565 210 L584 222 L596 245 L605 268 L598 290 L602 322 L590 336 L580 345 L566 354 L562 330 L557 296"/>
<path d="M450 313 L450 351 L469 382 L458 390 L444 409 L425 398 L411 423 L395 398 L381 362 L365 324 L354 299"/>
<path d="M450 313 L466 288 M549 291 L560 324 L563 346 L549 368 L527 387 L494 384 L469 373"/>
<path d="M405 310 L418 360 L425 398 M432 290 L440 330 L437 370 M560 255 L585 300 M530 250 L560 290 M470 285 C500 272 530 278 556 296 M390 320 L400 380"/>
<path d="M307 329 L319 311 L346 300 L360 305 L366 323 L356 384 L360 438 L366 499 L421 488 M440 540 L375 549 L337 538 L320 515 L314 438 L310 390 L300 360 L307 329"/>
<path d="M320 318 L335 340 M332 310 L345 335 M345 303 L352 330"/>
<path d="M312 383 L357 384 L357 399 L312 400 Z M300 392 L312 390 L312 404 L302 406 Z"/>
<path d="M418 470 L440 452 L490 444 L527 445 M533 500 L512 540 L460 555 L432 548 L418 510 Z"/>
<path d="M503 442 L534 414 L612 494 L582 378 L628 365 L672 436 L722 521 L700 554 M663 603 L612 612 L598 615 L503 442"/>
<path d="M534 414 L545 398 L565 386 L582 378 M529 389 L536 404 M560 366 L571 384"/>
<path d="M628 365 L645 351 L700 362 L722 395 L722 414 L697 444 L678 439 M690 420 L715 395 M697 444 L722 414"/>
<path d="M722 414 L760 430 L792 472 L780 500 L746 556 M697 444 L752 468 L713 540"/>
<path d="M675 550 L713 537 M738 550 L730 586 L711 613 L686 622 L674 611 L678 575 L675 550 M690 570 L688 600 M700 575 L698 605 M712 570 L710 600"/>
<path d="M711 535 L746 550 L744 564 L713 548 Z"/>
<path d="M604 610 L559 651 L495 689 L462 720 L393 728 L444 753 L495 771 L589 756"/>
<path d="M612 612 L604 676 L594 753 L574 804 L533 860 M671 666 L673 738 L656 779 L610 825 L597 840"/>
<path d="M665 600 L744 593 M793 590 L845 674 M764 521 L826 502 L870 480 L893 440 M759 536 L870 522 M860 523 L971 468 L988 456 L930 580 L852 597 L748 596"/>
<path d="M856 600 L947 682 M843 685 L947 682"/>
<path d="M606 826 L636 824 L636 832 L673 836 L681 850 L723 831 L736 836 L779 807 L795 810"/>
<path d="M681 752 L679 828 M702 717 L731 815 M731 680 L779 797 M680 700 L690 740"/>
<path d="M766 712 L773 680 M766 712 L776 754 L800 781 L832 791 L853 781 L850 733 L843 680"/>
<path d="M768 812 L810 865 L826 889 L885 881 L863 831 L848 805 L810 794 M837 892 L853 949 M885 881 L908 949"/>
<path d="M853 745 L870 742 L885 735 L882 750 L870 748 L888 765 L872 762 L858 752 M855 895 L832 895 L805 915 L830 905 L812 935 L838 900"/>
<path d="M880 827 L921 803 L946 821 L975 875 L979 920 L957 934 L932 927 L918 901 L908 871 L890 844 M901 853 L936 838 L945 843 M905 868 L942 853 M908 877 L946 864 M912 881 C918 905 935 915 950 912 C960 905 958 880 948 858"/>
<path d="M628 627 L664 575 L683 580 L675 652 L663 657 Z M676 652 L683 616 L722 622 L719 660 Z M708 589 L742 579 L749 635 L711 642 Z"/>
</g>
<!-- hat and dice -->
<ellipse cx="492" cy="233" rx="38" ry="17" fill="#6e655c" transform="rotate(-4 492 233)"/>
<path d="M466 195 L494 176 L523 195 L519 224 L497 239 L470 230 Z" fill="#ece4dc" stroke="#5a5550" stroke-width="1.2"/>
<path d="M466 195 L497 212 L523 195 M497 212 L497 239" fill="none" stroke="#5a5550" stroke-width="1"/>
<circle cx="497" cy="191" r="4.5" fill="#c0282a"/>
<g fill="#3b3633"><circle cx="475" cy="210" r="2"/><circle cx="486" cy="226" r="2"/><circle cx="510" cy="214" r="2"/><circle cx="505" cy="228" r="2"/><circle cx="518" cy="203" r="2"/></g>
<path d="M411 280 Q425 250 458 233" fill="none" stroke="#5d554d" stroke-width="4"/>
<!-- CHIPS -->
<g fill="none" stroke="#4f5450" stroke-width="2.6" stroke-linecap="round">
<path d="M606 275 C618 276 622 290 620 300 C618 305 612 306 604 305"/>
<ellipse cx="636" cy="291" rx="10" ry="12"/>
<path d="M630 313 C622 320 624 332 632 336 C640 338 642 330 640 322"/>
<ellipse cx="830" cy="424" rx="16" ry="15"/>
<path d="M812 415 C805 425 806 435 812 440 M818 412 C811 422 812 434 818 440"/>
<ellipse cx="450" cy="602" rx="18" ry="17"/>
<path d="M466 590 C474 600 474 612 466 618 M472 588 C480 598 480 612 472 620"/>
<ellipse cx="425" cy="686" rx="16" ry="16"/>
<path d="M438 670 C446 680 446 694 438 703 M443 668 C450 680 450 694 443 705"/>
</g>
<!-- TABLE / CARD LINES -->
<g fill="none" stroke="#a3a09b" stroke-width="3.6" stroke-linecap="round" stroke-linejoin="round" style="mix-blend-mode:multiply">
<path d="M444 170 C410 185 390 196 371 208 C350 222 332 236 318 250 C300 268 288 282 276 296 C262 320 252 345 245 373 C236 410 230 440 226 476 L222 499"/>
<path d="M222 602 C226 640 230 670 238 700 C244 725 252 740 264 757"/>
<path d="M513 182 L546 170"/>
<path d="M364 281 L341 296"/>
<path d="M310 346 C300 365 295 378 291 388 C284 410 279 430 276 453 C272 480 269 500 268 515 C267 540 267 580 270 600 C273 640 278 670 288 700 C293 720 296 727 301 728 C320 760 350 800 386 826"/>
<path d="M329 346 L383 377 L379 442 L329 436 M333 350 L331 430"/>
<path d="M285 518 L337 515 L344 560"/>
<path d="M293 519 L287 517 L323 679 L370 643 L346 547"/>
<path d="M439 503 L468 501 L492 557 L463 568 L442 507"/>
<path d="M236 767 L325 736 M243 767 C255 800 262 830 275 852 C300 885 320 905 344 920 L386 875"/>
<path d="M357 856 L418 790 L505 836 L487 932"/>
<path d="M355 858 C400 880 440 900 487 918 M492 905 C520 910 550 916 582 921"/>
<path d="M366 903 C390 920 410 935 434 950"/>
<path d="M527 693 L564 749 L558 805 M503 737 L527 693 M503 737 L553 794"/>
<path d="M572 918 C600 916 630 915 652 913 C680 905 700 897 723 889 C760 875 785 866 805 858"/>
<path d="M726 950 C750 935 780 920 803 913 C840 895 870 878 901 863"/>
<path d="M930 805 C990 780 1050 755 1108 733 C1160 713 1210 697 1261 680"/>
<path d="M949 839 C1000 815 1060 790 1110 767"/>
<path d="M1110 717 L1198 744 L1261 714"/>
<path d="M1110 717 L1097 834 M1086 834 L1157 908 L1198 744"/>
<path d="M943 680 L946 704 L1007 752 M1012 680 L1002 749 M1012 685 L1052 704 L1049 680"/>
<path d="M994 464 C1020 490 1040 510 1060 517 C1090 530 1110 534 1139 536 C1180 540 1220 539 1261 539"/>
<path d="M980 475 C1000 500 1020 520 1047 536 C1080 552 1120 560 1166 565 C1200 566 1230 565 1261 565"/>
<path d="M991 560 L1047 536 L1052 700 M994 562 L996 642 M943 621 L1018 645 M951 621 L949 700 M1010 645 L1012 700 M1012 687 L1044 700"/>
<path d="M901 631 L946 679 L951 700 M901 679 L951 684"/>
<path d="M699 253 L757 321 L744 370 L698 313 Z"/>
<path d="M763 170 C768 190 766 230 761 260 M759 248 C790 270 810 285 826 302 C840 320 860 340 890 374"/>
<path d="M826 302 L849 203 C880 240 910 280 932 308 L885 366"/>
<path d="M829 170 C850 185 870 200 885 212 L871 239 M890 170 L887 244"/>
<path d="M927 170 C920 190 915 205 914 218 C912 240 914 256 916 271 M924 318 C925 340 926 370 927 392"/>
<path d="M901 334 C910 355 918 375 925 392 M954 395 C962 410 970 425 978 440"/>
<path d="M853 600 L932 661"/>
</g>
<!-- ROULETTE (lighter brown-gray) -->
<g fill="none" stroke="#aba7a2" stroke-width="3" stroke-linecap="round" stroke-linejoin="round" style="mix-blend-mode:multiply">
<path d="M1012 170 C1000 200 996 230 996 260 C996 300 1003 330 1015 350 C1025 370 1035 385 1049 395 C1070 410 1090 420 1113 424 C1130 430 1150 437 1166 440 C1190 446 1230 448 1261 448"/>
<path d="M1044 170 C1034 200 1028 220 1028 236 C1028 270 1032 290 1041 310 C1050 330 1060 345 1073 355 C1085 365 1100 373 1113 379 C1135 386 1150 390 1166 392 C1190 397 1220 400 1261 400"/>
<path d="M1076 170 C1068 195 1063 210 1063 223 C1062 245 1063 255 1065 268 C1070 285 1077 295 1086 302 C1100 320 1112 332 1126 340 C1140 348 1152 352 1166 353 C1200 355 1220 352 1245 350"/>
<path d="M1000 188 L1032 192 M997 225 L1028 226 M997 258 L1028 255 M1000 293 L1032 290 M1008 320 L1040 310 M1025 352 L1060 340 M1040 376 L1070 355 M1060 393 L1085 365 M1085 408 L1105 375 M1115 423 L1130 388 M1145 433 L1158 392 M1178 440 L1185 395 M1210 446 L1212 398 M1240 448 L1240 400"/>
<path d="M1032 174 L1056 180 M1030 205 L1063 207 M1034 244 L1063 247 M1041 287 L1065 268"/>
<path d="M1147 395 L1153 352 M1180 400 L1181 355 M1214 400 L1213 354 M1244 400 L1244 351"/>
<circle cx="1178" cy="218" r="23"/>
<circle cx="1178" cy="218" r="14"/>
<path d="M1155 225 C1120 250 1090 270 1050 310 M1155 240 C1120 260 1090 280 1060 312"/>
<path d="M1200 205 C1220 190 1240 180 1261 175 M1198 190 C1215 180 1230 172 1240 170"/>
<path d="M1195 240 C1210 265 1230 300 1255 345 M1185 248 C1195 265 1200 280 1205 285"/>
<path d="M1170 195 C1160 185 1150 178 1140 170"/>
<path d="M1051 316 L1040 320 L1036 333 L1048 336 L1060 325"/>
<path d="M955 176 L967 170 L980 182 L968 188 Z"/>
<path d="M950 240 L960 228 L963 250 L955 262 Z"/>
<path d="M954 351 L971 337 L987 340 L974 353 Z"/>
<path d="M1012 412 L1032 415 L1027 430 L1010 435 Z"/>
<path d="M1098 471 L1113 459 L1112 486 L1098 500 Z"/>
<path d="M1177 482 L1196 470 L1219 496 L1194 504 Z"/>
<path d="M1247 360 C1255 375 1260 380 1261 382"/>
</g>

</g>
</svg>

<div class="a" style="left:1445px;top:91px;width:5px;height:916px;background:#3a3a3a;"></div>
<div class="a" style="left:1450px;top:91px;width:470px;height:17px;background:#424242;"></div>
<div class="a" style="left:1506px;top:108px;width:4px;height:899px;background:#3a3a3a;"></div>
<div class="a" style="left:1450px;top:109px;width:56px;height:60px;background:#535353;border:1px solid #464646"></div>
<div class="a" style="left:1465px;top:114px;width:1px;height:6px;background:#3e3e3e;"></div>
<div class="a" style="left:1468px;top:114px;width:1px;height:6px;background:#3e3e3e;"></div>
<div class="a" style="left:1471px;top:114px;width:1px;height:6px;background:#3e3e3e;"></div>
<div class="a" style="left:1474px;top:114px;width:1px;height:6px;background:#3e3e3e;"></div>
<div class="a" style="left:1477px;top:114px;width:1px;height:6px;background:#3e3e3e;"></div>
<div class="a" style="left:1480px;top:114px;width:1px;height:6px;background:#3e3e3e;"></div>
<div class="a" style="left:1483px;top:114px;width:1px;height:6px;background:#3e3e3e;"></div>
<div class="a" style="left:1486px;top:114px;width:1px;height:6px;background:#3e3e3e;"></div>
<div class="a" style="left:1489px;top:114px;width:1px;height:6px;background:#3e3e3e;"></div>
<div class="a" style="left:1450px;top:171px;width:56px;height:60px;background:#535353;border:1px solid #464646"></div>
<div class="a" style="left:1465px;top:176px;width:1px;height:6px;background:#3e3e3e;"></div>
<div class="a" style="left:1468px;top:176px;width:1px;height:6px;background:#3e3e3e;"></div>
<div class="a" style="left:1471px;top:176px;width:1px;height:6px;background:#3e3e3e;"></div>
<div class="a" style="left:1474px;top:176px;width:1px;height:6px;background:#3e3e3e;"></div>
<div class="a" style="left:1477px;top:176px;width:1px;height:6px;background:#3e3e3e;"></div>
<div class="a" style="left:1480px;top:176px;width:1px;height:6px;background:#3e3e3e;"></div>
<div class="a" style="left:1483px;top:176px;width:1px;height:6px;background:#3e3e3e;"></div>
<div class="a" style="left:1486px;top:176px;width:1px;height:6px;background:#3e3e3e;"></div>
<div class="a" style="left:1489px;top:176px;width:1px;height:6px;background:#3e3e3e;"></div>
<div class="a" style="left:1450px;top:233px;width:56px;height:60px;background:#535353;border:1px solid #464646"></div>
<div class="a" style="left:1465px;top:238px;width:1px;height:6px;background:#3e3e3e;"></div>
<div class="a" style="left:1468px;top:238px;width:1px;height:6px;background:#3e3e3e;"></div>
<div class="a" style="left:1471px;top:238px;width:1px;height:6px;background:#3e3e3e;"></div>
<div class="a" style="left:1474px;top:238px;width:1px;height:6px;background:#3e3e3e;"></div>
<div class="a" style="left:1477px;top:238px;width:1px;height:6px;background:#3e3e3e;"></div>
<div class="a" style="left:1480px;top:238px;width:1px;height:6px;background:#3e3e3e;"></div>
<div class="a" style="left:1483px;top:238px;width:1px;height:6px;background:#3e3e3e;"></div>
<div class="a" style="left:1486px;top:238px;width:1px;height:6px;background:#3e3e3e;"></div>
<div class="a" style="left:1489px;top:238px;width:1px;height:6px;background:#3e3e3e;"></div>
<div class="a" style="left:1450px;top:295px;width:56px;height:101px;background:#535353;border:1px solid #464646"></div>
<div class="a" style="left:1465px;top:300px;width:1px;height:6px;background:#3e3e3e;"></div>
<div class="a" style="left:1468px;top:300px;width:1px;height:6px;background:#3e3e3e;"></div>
<div class="a" style="left:1471px;top:300px;width:1px;height:6px;background:#3e3e3e;"></div>
<div class="a" style="left:1474px;top:300px;width:1px;height:6px;background:#3e3e3e;"></div>
<div class="a" style="left:1477px;top:300px;width:1px;height:6px;background:#3e3e3e;"></div>
<div class="a" style="left:1480px;top:300px;width:1px;height:6px;background:#3e3e3e;"></div>
<div class="a" style="left:1483px;top:300px;width:1px;height:6px;background:#3e3e3e;"></div>
<div class="a" style="left:1486px;top:300px;width:1px;height:6px;background:#3e3e3e;"></div>
<div class="a" style="left:1489px;top:300px;width:1px;height:6px;background:#3e3e3e;"></div>
<div class="a" style="left:1450px;top:398px;width:56px;height:59px;background:#535353;border:1px solid #464646"></div>
<div class="a" style="left:1465px;top:403px;width:1px;height:6px;background:#3e3e3e;"></div>
<div class="a" style="left:1468px;top:403px;width:1px;height:6px;background:#3e3e3e;"></div>
<div class="a" style="left:1471px;top:403px;width:1px;height:6px;background:#3e3e3e;"></div>
<div class="a" style="left:1474px;top:403px;width:1px;height:6px;background:#3e3e3e;"></div>
<div class="a" style="left:1477px;top:403px;width:1px;height:6px;background:#3e3e3e;"></div>
<div class="a" style="left:1480px;top:403px;width:1px;height:6px;background:#3e3e3e;"></div>
<div class="a" style="left:1483px;top:403px;width:1px;height:6px;background:#3e3e3e;"></div>
<div class="a" style="left:1486px;top:403px;width:1px;height:6px;background:#3e3e3e;"></div>
<div class="a" style="left:1489px;top:403px;width:1px;height:6px;background:#3e3e3e;"></div>
<div class="a" style="left:1450px;top:459px;width:56px;height:60px;background:#535353;border:1px solid #464646"></div>
<div class="a" style="left:1465px;top:464px;width:1px;height:6px;background:#3e3e3e;"></div>
<div class="a" style="left:1468px;top:464px;width:1px;height:6px;background:#3e3e3e;"></div>
<div class="a" style="left:1471px;top:464px;width:1px;height:6px;background:#3e3e3e;"></div>
<div class="a" style="left:1474px;top:464px;width:1px;height:6px;background:#3e3e3e;"></div>
<div class="a" style="left:1477px;top:464px;width:1px;height:6px;background:#3e3e3e;"></div>
<div class="a" style="left:1480px;top:464px;width:1px;height:6px;background:#3e3e3e;"></div>
<div class="a" style="left:1483px;top:464px;width:1px;height:6px;background:#3e3e3e;"></div>
<div class="a" style="left:1486px;top:464px;width:1px;height:6px;background:#3e3e3e;"></div>
<div class="a" style="left:1489px;top:464px;width:1px;height:6px;background:#3e3e3e;"></div>
<div class="a" style="left:1450px;top:521px;width:56px;height:486px;background:#535353;border:1px solid #464646"></div>
<svg class="ic" style="left:1487px;top:95px;" width="14" height="8" viewBox="0 0 14 8"><path d="M5 1 L1.5 4 L5 7 M11 1 L7.5 4 L11 7" fill="none" stroke="#e6e6e6" stroke-width="1.3"/></svg>
<svg class="ic" style="left:1898px;top:95px;" width="14" height="8" viewBox="0 0 14 8"><path d="M1 1 L4.5 4 L1 7 M7 1 L10.5 4 L7 7" fill="none" stroke="#e6e6e6" stroke-width="1.3"/></svg>
<svg class="ic" style="left:1463px;top:130px;" width="30" height="30" viewBox="0 0 30 30"><g fill="#dcdcdc"><rect x="1" y="1" width="4" height="4"/><rect x="1" y="7" width="4" height="4"/><rect x="1" y="13" width="4" height="4"/><rect x="7" y="2" width="6" height="2"/><rect x="7" y="8" width="6" height="2"/><rect x="7" y="14" width="6" height="2"/></g><path d="M30 5 C27 9 21 14 18 17 L16 15 C20 11 26 7 30 5 Z M16 18 C15 24 10 26 6 26 C9 24 10 20 13 17 Z" fill="#dcdcdc"/></svg>
<svg class="ic" style="left:1463px;top:190px;" width="30" height="30" viewBox="0 0 30 30"><g fill="#dcdcdc"><rect x="1" y="1" width="4" height="4"/><rect x="1" y="7" width="4" height="4"/><rect x="1" y="13" width="4" height="4"/><rect x="7" y="2" width="6" height="2"/><rect x="7" y="8" width="6" height="2"/><rect x="7" y="14" width="6" height="2"/></g><circle cx="19" cy="6" r="4.5" fill="#dcdcdc"/><path d="M17 9 H21 V16 H26 Q28 16 28 18 V21 H10 V18 Q10 16 12 16 H17 Z" fill="#dcdcdc"/><rect x="10" y="23" width="18" height="2" fill="#dcdcdc"/></svg>
<svg class="ic" style="left:1463px;top:255px;" width="30" height="24" viewBox="0 0 30 24"><path d="M1 5 Q4 1 9 2 Q13 3 13 5 Q13 7 9 8 Q4 9 1 5 Z" fill="#dcdcdc"/><rect x="13" y="4" width="16" height="3" fill="#dcdcdc"/><rect x="4" y="15" width="16" height="3" fill="#dcdcdc"/><path d="M29 17 Q26 11 20 13 V20 Q26 23 29 17 Z" fill="#dcdcdc"/></svg>
<div class="t" style="left:1466px;top:313px;font-size:26px;color:#dcdcdc">A</div>
<div class="a" style="left:1487px;top:315px;width:2px;height:24px;background:#dcdcdc;"></div>
<div class="t" style="left:1467px;top:356px;font-size:26px;color:#dcdcdc;font-weight:bold">¶</div>
<div class="t" style="left:1466px;top:418px;font-size:28px;color:#dcdcdc;font-style:italic;font-family:'Liberation Serif',serif">A</div>
<svg class="ic" style="left:1465px;top:476px;" width="28" height="30" viewBox="0 0 28 30"><path d="M1 4 V29 H27 V5 H13 L11 2 H1" fill="none" stroke="#dcdcdc" stroke-width="1.6"/><rect x="6" y="12" width="16" height="13" fill="#dcdcdc"/><rect x="6" y="9" width="5" height="4" fill="#dcdcdc"/><rect x="16" y="9" width="5" height="4" fill="#dcdcdc"/></svg>
<div class="a" style="left:1510px;top:108px;width:410px;height:452px;background:#535353;"></div>
<div class="a" style="left:1510px;top:108px;width:410px;height:43px;background:#424242;"></div>
<div class="a" style="left:1511px;top:109px;width:59px;height:42px;background:#454545;"></div>
<div class="a" style="left:1570px;top:109px;width:60px;height:43px;background:#535353;"></div>
<div class="t" style="left:1524px;top:119px;font-size:17px;color:#a8a8a8;">颜色</div>
<div class="t" style="left:1584px;top:119px;font-size:17px;color:#f0f0f0;">色板</div>
<div class="a" style="left:1895px;top:126px;width:15px;height:2px;background:#cfcfcf;"></div>
<div class="a" style="left:1895px;top:129px;width:15px;height:2px;background:#cfcfcf;"></div>
<div class="a" style="left:1895px;top:132px;width:15px;height:2px;background:#cfcfcf;"></div>
<div class="a" style="left:1895px;top:135px;width:15px;height:2px;background:#cfcfcf;"></div>
<div class="a" style="left:1520px;top:165px;width:386px;height:27px;background:#4a4a4a;"></div>
<div class="a" style="left:1522px;top:167px;width:24px;height:24px;background:#ada08c;"></div>
<div class="a" style="left:1549px;top:167px;width:24px;height:24px;background:#cbbba3;"></div>
<div class="a" style="left:1576px;top:167px;width:24px;height:24px;background:#7b7061;"></div>
<div class="a" style="left:1603px;top:167px;width:24px;height:24px;background:#3b302c;"></div>
<div class="a" style="left:1630px;top:167px;width:24px;height:24px;background:#b2d36a;"></div>
<div class="a" style="left:1657px;top:167px;width:24px;height:24px;background:#33ae6c;"></div>
<div class="a" style="left:1684px;top:167px;width:24px;height:24px;background:#c6c894;"></div>
<div class="a" style="left:1711px;top:167px;width:24px;height:24px;background:#82c56e;"></div>
<div class="a" style="left:1738px;top:167px;width:24px;height:24px;background:#f49b9e;"></div>
<div class="a" style="left:1765px;top:167px;width:24px;height:24px;background:#e9677a;"></div>
<div class="a" style="left:1792px;top:167px;width:24px;height:24px;background:#e8679c;"></div>
<div class="a" style="left:1819px;top:167px;width:24px;height:24px;background:#f0b48c;"></div>
<div class="a" style="left:1846px;top:167px;width:24px;height:24px;background:#e39a6c;"></div>
<div class="a" style="left:1873px;top:167px;width:24px;height:24px;background:#f4c59d;"></div>
<div class="a" style="left:1510px;top:203px;width:408px;height:1px;background:#3e3e3e;"></div>
<div class="a" style="left:1510px;top:204px;width:378px;height:316px;background:#535353;"></div>
<div class="a" style="left:1888px;top:204px;width:30px;height:316px;background:#4a4a4a;"></div>
<div class="a" style="left:1918px;top:151px;width:2px;height:369px;background:#424242;"></div>
<div class="a" style="left:1511px;top:205px;width:378px;height:273px;background:#444444;"></div>
<div class="a" style="left:1513px;top:207px;width:24px;height:24px;background:#ff0000;"></div>
<div class="a" style="left:1540px;top:207px;width:24px;height:24px;background:#ffff00;"></div>
<div class="a" style="left:1567px;top:207px;width:24px;height:24px;background:#00ff00;"></div>
<div class="a" style="left:1594px;top:207px;width:24px;height:24px;background:#00ffff;"></div>
<div class="a" style="left:1621px;top:207px;width:24px;height:24px;background:#0000ff;"></div>
<div class="a" style="left:1648px;top:207px;width:24px;height:24px;background:#ff00ff;"></div>
<div class="a" style="left:1675px;top:207px;width:24px;height:24px;background:#ffffff;"></div>
<div class="a" style="left:1702px;top:207px;width:24px;height:24px;background:#eeeeee;"></div>
<div class="a" style="left:1729px;top:207px;width:24px;height:24px;background:#e3e3e3;"></div>
<div class="a" style="left:1756px;top:207px;width:24px;height:24px;background:#d9d9d9;"></div>
<div class="a" style="left:1783px;top:207px;width:24px;height:24px;background:#cfcfcf;"></div>
<div class="a" style="left:1810px;top:207px;width:24px;height:24px;background:#c5c5c5;"></div>
<div class="a" style="left:1837px;top:207px;width:24px;height:24px;background:#bcbcbc;"></div>
<div class="a" style="left:1864px;top:207px;width:24px;height:24px;background:#b2b2b2;"></div>
<div class="a" style="left:1513px;top:234px;width:24px;height:24px;background:#a8a8a8;"></div>
<div class="a" style="left:1540px;top:234px;width:24px;height:24px;background:#9f9f9f;"></div>
<div class="a" style="left:1567px;top:234px;width:24px;height:24px;background:#e50012;"></div>
<div class="a" style="left:1594px;top:234px;width:24px;height:24px;background:#fff100;"></div>
<div class="a" style="left:1621px;top:234px;width:24px;height:24px;background:#009944;"></div>
<div class="a" style="left:1648px;top:234px;width:24px;height:24px;background:#00a0e9;"></div>
<div class="a" style="left:1675px;top:234px;width:24px;height:24px;background:#1d2088;"></div>
<div class="a" style="left:1702px;top:234px;width:24px;height:24px;background:#e4007f;"></div>
<div class="a" style="left:1729px;top:234px;width:24px;height:24px;background:#959595;"></div>
<div class="a" style="left:1756px;top:234px;width:24px;height:24px;background:#888888;"></div>
<div class="a" style="left:1783px;top:234px;width:24px;height:24px;background:#7c7c7c;"></div>
<div class="a" style="left:1810px;top:234px;width:24px;height:24px;background:#6f6f6f;"></div>
<div class="a" style="left:1837px;top:234px;width:24px;height:24px;background:#626262;"></div>
<div class="a" style="left:1864px;top:234px;width:24px;height:24px;background:#545454;"></div>
<div class="a" style="left:1513px;top:261px;width:24px;height:24px;background:#363636;"></div>
<div class="a" style="left:1540px;top:261px;width:24px;height:24px;background:#1a1a1a;"></div>
<div class="a" style="left:1567px;top:261px;width:24px;height:24px;background:#000000;"></div>
<div class="a" style="left:1594px;top:261px;width:24px;height:24px;background:#f29c7a;"></div>
<div class="a" style="left:1621px;top:261px;width:24px;height:24px;background:#f6b17f;"></div>
<div class="a" style="left:1648px;top:261px;width:24px;height:24px;background:#f9cb8c;"></div>
<div class="a" style="left:1675px;top:261px;width:24px;height:24px;background:#fff799;"></div>
<div class="a" style="left:1702px;top:261px;width:24px;height:24px;background:#cfe29c;"></div>
<div class="a" style="left:1729px;top:261px;width:24px;height:24px;background:#acd598;"></div>
<div class="a" style="left:1756px;top:261px;width:24px;height:24px;background:#8ac997;"></div>
<div class="a" style="left:1783px;top:261px;width:24px;height:24px;background:#87ccc6;"></div>
<div class="a" style="left:1810px;top:261px;width:24px;height:24px;background:#7ecef4;"></div>
<div class="a" style="left:1837px;top:261px;width:24px;height:24px;background:#88abda;"></div>
<div class="a" style="left:1864px;top:261px;width:24px;height:24px;background:#464646;"></div>
<div class="a" style="left:1513px;top:288px;width:24px;height:24px;background:#8c97cb;"></div>
<div class="a" style="left:1540px;top:288px;width:24px;height:24px;background:#8f82bc;"></div>
<div class="a" style="left:1567px;top:288px;width:24px;height:24px;background:#aa89bd;"></div>
<div class="a" style="left:1594px;top:288px;width:24px;height:24px;background:#c490bf;"></div>
<div class="a" style="left:1621px;top:288px;width:24px;height:24px;background:#f19ec2;"></div>
<div class="a" style="left:1648px;top:288px;width:24px;height:24px;background:#f29c9f;"></div>
<div class="a" style="left:1675px;top:288px;width:24px;height:24px;background:#eb6841;"></div>
<div class="a" style="left:1702px;top:288px;width:24px;height:24px;background:#f19149;"></div>
<div class="a" style="left:1729px;top:288px;width:24px;height:24px;background:#f8b551;"></div>
<div class="a" style="left:1756px;top:288px;width:24px;height:24px;background:#fff45c;"></div>
<div class="a" style="left:1783px;top:288px;width:24px;height:24px;background:#b3d465;"></div>
<div class="a" style="left:1810px;top:288px;width:24px;height:24px;background:#80c269;"></div>
<div class="a" style="left:1837px;top:288px;width:24px;height:24px;background:#32b16c;"></div>
<div class="a" style="left:1864px;top:288px;width:24px;height:24px;background:#13b5b1;"></div>
<div class="a" style="left:1513px;top:315px;width:24px;height:24px;background:#00b7ee;"></div>
<div class="a" style="left:1540px;top:315px;width:24px;height:24px;background:#448aca;"></div>
<div class="a" style="left:1567px;top:315px;width:24px;height:24px;background:#556fb5;"></div>
<div class="a" style="left:1594px;top:315px;width:24px;height:24px;background:#5f52a0;"></div>
<div class="a" style="left:1621px;top:315px;width:24px;height:24px;background:#8957a1;"></div>
<div class="a" style="left:1648px;top:315px;width:24px;height:24px;background:#ae5da1;"></div>
<div class="a" style="left:1675px;top:315px;width:24px;height:24px;background:#ea68a2;"></div>
<div class="a" style="left:1702px;top:315px;width:24px;height:24px;background:#007130;"></div>
<div class="a" style="left:1729px;top:315px;width:24px;height:24px;background:#eb6877;"></div>
<div class="a" style="left:1756px;top:315px;width:24px;height:24px;background:#e60012;"></div>
<div class="a" style="left:1783px;top:315px;width:24px;height:24px;background:#eb6100;"></div>
<div class="a" style="left:1810px;top:315px;width:24px;height:24px;background:#f39800;"></div>
<div class="a" style="left:1837px;top:315px;width:24px;height:24px;background:#fff100;"></div>
<div class="a" style="left:1864px;top:315px;width:24px;height:24px;background:#8fc31f;"></div>
<div class="a" style="left:1513px;top:342px;width:24px;height:24px;background:#22ac38;"></div>
<div class="a" style="left:1540px;top:342px;width:24px;height:24px;background:#009944;"></div>
<div class="a" style="left:1567px;top:342px;width:24px;height:24px;background:#009e96;"></div>
<div class="a" style="left:1594px;top:342px;width:24px;height:24px;background:#00a0e9;"></div>
<div class="a" style="left:1621px;top:342px;width:24px;height:24px;background:#0068b7;"></div>
<div class="a" style="left:1648px;top:342px;width:24px;height:24px;background:#00479d;"></div>
<div class="a" style="left:1675px;top:342px;width:24px;height:24px;background:#1d2088;"></div>
<div class="a" style="left:1702px;top:342px;width:24px;height:24px;background:#601986;"></div>
<div class="a" style="left:1729px;top:342px;width:24px;height:24px;background:#920783;"></div>
<div class="a" style="left:1756px;top:342px;width:24px;height:24px;background:#e4007f;"></div>
<div class="a" style="left:1783px;top:342px;width:24px;height:24px;background:#e5004f;"></div>
<div class="a" style="left:1810px;top:342px;width:24px;height:24px;background:#a40000;"></div>
<div class="a" style="left:1837px;top:342px;width:24px;height:24px;background:#a84200;"></div>
<div class="a" style="left:1864px;top:342px;width:24px;height:24px;background:#ac6a00;"></div>
<div class="a" style="left:1513px;top:369px;width:24px;height:24px;background:#b8a800;"></div>
<div class="a" style="left:1540px;top:369px;width:24px;height:24px;background:#638c0b;"></div>
<div class="a" style="left:1567px;top:369px;width:24px;height:24px;background:#0d7f24;"></div>
<div class="a" style="left:1594px;top:369px;width:24px;height:24px;background:#007271;"></div>
<div class="a" style="left:1621px;top:369px;width:24px;height:24px;background:#0075a9;"></div>
<div class="a" style="left:1648px;top:369px;width:24px;height:24px;background:#004986;"></div>
<div class="a" style="left:1675px;top:369px;width:24px;height:24px;background:#003178;"></div>
<div class="a" style="left:1702px;top:369px;width:24px;height:24px;background:#100964;"></div>
<div class="a" style="left:1729px;top:369px;width:24px;height:24px;background:#440062;"></div>
<div class="a" style="left:1756px;top:369px;width:24px;height:24px;background:#6a005f;"></div>
<div class="a" style="left:1783px;top:369px;width:24px;height:24px;background:#a1005e;"></div>
<div class="a" style="left:1810px;top:369px;width:24px;height:24px;background:#a40035;"></div>
<div class="a" style="left:1837px;top:369px;width:24px;height:24px;background:#7f0000;"></div>
<div class="a" style="left:1864px;top:369px;width:24px;height:24px;background:#7d3000;"></div>
<div class="a" style="left:1513px;top:396px;width:24px;height:24px;background:#824800;"></div>
<div class="a" style="left:1540px;top:396px;width:24px;height:24px;background:#8b7c00;"></div>
<div class="a" style="left:1567px;top:396px;width:24px;height:24px;background:#436c00;"></div>
<div class="a" style="left:1594px;top:396px;width:24px;height:24px;background:#005e15;"></div>
<div class="a" style="left:1621px;top:396px;width:24px;height:24px;background:#005523;"></div>
<div class="a" style="left:1648px;top:396px;width:24px;height:24px;background:#00554f;"></div>
<div class="a" style="left:1675px;top:396px;width:24px;height:24px;background:#005982;"></div>
<div class="a" style="left:1702px;top:396px;width:24px;height:24px;background:#00355f;"></div>
<div class="a" style="left:1729px;top:396px;width:24px;height:24px;background:#001c58;"></div>
<div class="a" style="left:1756px;top:396px;width:24px;height:24px;background:#000050;"></div>
<div class="a" style="left:1783px;top:396px;width:24px;height:24px;background:#300048;"></div>
<div class="a" style="left:1810px;top:396px;width:24px;height:24px;background:#4a004a;"></div>
<div class="a" style="left:1837px;top:396px;width:24px;height:24px;background:#7e0046;"></div>
<div class="a" style="left:1864px;top:396px;width:24px;height:24px;background:#7f0020;"></div>
<div class="a" style="left:1513px;top:423px;width:24px;height:24px;background:#d5c1a4;"></div>
<div class="a" style="left:1540px;top:423px;width:24px;height:24px;background:#a59078;"></div>
<div class="a" style="left:1567px;top:423px;width:24px;height:24px;background:#7f6d5c;"></div>
<div class="a" style="left:1594px;top:423px;width:24px;height:24px;background:#5b4a3e;"></div>
<div class="a" style="left:1621px;top:423px;width:24px;height:24px;background:#3b2f2c;"></div>
<div class="a" style="left:1648px;top:423px;width:24px;height:24px;background:#cfa972;"></div>
<div class="a" style="left:1675px;top:423px;width:24px;height:24px;background:#9a6c34;"></div>
<div class="a" style="left:1702px;top:423px;width:24px;height:24px;background:#85501f;"></div>
<div class="a" style="left:1729px;top:423px;width:24px;height:24px;background:#6a3c0d;"></div>
<div class="a" style="left:1756px;top:423px;width:24px;height:24px;background:#95a7c8;"></div>
<div class="a" style="left:1783px;top:423px;width:24px;height:24px;background:#ecf0f1;"></div>
<div class="a" style="left:1810px;top:423px;width:24px;height:24px;background:#facfa8;"></div>
<div class="a" style="left:1837px;top:423px;width:24px;height:24px;background:#e7cab8;"></div>
<div class="a" style="left:1864px;top:423px;width:24px;height:24px;background:#e4966b;"></div>
<div class="a" style="left:1513px;top:450px;width:24px;height:24px;background:#bd705a;"></div>
<div class="a" style="left:1540px;top:450px;width:24px;height:24px;background:#b78d53;"></div>
<div class="a" style="left:1567px;top:450px;width:24px;height:24px;background:#bd8c6b;"></div>
<div class="a" style="left:1594px;top:450px;width:24px;height:24px;background:#574639;"></div>
<div class="a" style="left:1621px;top:450px;width:24px;height:24px;background:#e60012;"></div>
<div class="a" style="left:1648px;top:450px;width:24px;height:24px;background:#c81044;"></div>
<div class="a" style="left:1675px;top:450px;width:24px;height:24px;background:#94163b;"></div>
<div class="a" style="left:1702px;top:450px;width:24px;height:24px;background:#f8d231;"></div>
<div class="a" style="left:1729px;top:450px;width:24px;height:24px;background:#c48f2f;"></div>
<div class="a" style="left:1756px;top:450px;width:24px;height:24px;background:#e4a33a;"></div>
<div class="a" style="left:1783px;top:450px;width:24px;height:24px;background:#f1ecdc;"></div>
<div class="a" style="left:1810px;top:450px;width:24px;height:24px;background:#b9aa9a;"></div>
<div class="a" style="left:1837px;top:450px;width:24px;height:24px;background:#3c2e20;"></div>
<div class="a" style="left:1864px;top:450px;width:24px;height:24px;background:#968151;"></div>
<div class="a" style="left:1618px;top:420px;width:28px;height:28px;border:3px solid #2ba9e6"></div>
<div class="a" style="left:1621px;top:423px;width:22px;height:22px;background:#3b2f2c;"></div>
<div class="a" style="left:1510px;top:520px;width:410px;height:2px;background:#3e3e3e;"></div>
<svg class="ic" style="left:1771px;top:532px;" width="19" height="16" viewBox="0 0 19 16"><path d="M0 3 V15 H19 V4 H8 L6 1 H1 Z" fill="#dcdcdc"/><path d="M0 4 H19" stroke="#535353" stroke-width="1"/></svg>
<svg class="ic" style="left:1815px;top:531px;" width="17" height="18" viewBox="0 0 17 18"><rect x="1" y="1" width="15" height="16" fill="none" stroke="#dcdcdc" stroke-width="1.6"/><path d="M8.5 5 V13 M4.5 9 H12.5" stroke="#dcdcdc" stroke-width="2"/></svg>
<svg class="ic" style="left:1859px;top:530px;" width="17" height="19" viewBox="0 0 17 19"><path d="M1 3 H16 M6 3 V1 H11 V3" fill="none" stroke="#dcdcdc" stroke-width="1.6"/><path d="M3 5 H14 L13 18 H4 Z" fill="none" stroke="#dcdcdc" stroke-width="1.6"/><path d="M6.5 7 V16 M8.5 7 V16 M10.5 7 V16" stroke="#dcdcdc" stroke-width="1.2"/></svg>
<div class="a" style="left:1510px;top:558px;width:410px;height:4px;background:#3a3a3a;"></div>
<div class="a" style="left:1510px;top:562px;width:410px;height:445px;background:#535353;"></div>
<div class="a" style="left:1510px;top:562px;width:410px;height:42px;background:#424242;"></div>
<div class="a" style="left:1511px;top:563px;width:58px;height:41px;background:#454545;"></div>
<div class="a" style="left:1570px;top:563px;width:59px;height:41px;background:#454545;"></div>
<div class="a" style="left:1630px;top:563px;width:59px;height:42px;background:#535353;"></div>
<div class="a" style="left:1690px;top:563px;width:58px;height:41px;background:#454545;"></div>
<div class="t" style="left:1524px;top:572px;font-size:17px;color:#a8a8a8;">学习</div>
<div class="t" style="left:1584px;top:572px;font-size:17px;color:#a8a8a8;">调整</div>
<div class="t" style="left:1644px;top:572px;font-size:17px;color:#f0f0f0;">图层</div>
<div class="t" style="left:1703px;top:572px;font-size:17px;color:#a8a8a8;">路径</div>
<div class="a" style="left:1895px;top:578px;width:15px;height:2px;background:#cfcfcf;"></div>
<div class="a" style="left:1895px;top:581px;width:15px;height:2px;background:#cfcfcf;"></div>
<div class="a" style="left:1895px;top:584px;width:15px;height:2px;background:#cfcfcf;"></div>
<div class="a" style="left:1895px;top:587px;width:15px;height:2px;background:#cfcfcf;"></div>
<div class="a" style="left:1515px;top:618px;width:128px;height:30px;background:#474747;border:1px solid #3c3c3c;border-radius:3px"></div>
<svg class="ic" style="left:1528px;top:625px;" width="16" height="17" viewBox="0 0 16 17"><circle cx="6.5" cy="6.5" r="5" fill="none" stroke="#dcdcdc" stroke-width="2.2"/><path d="M10 10 L15 15.5" stroke="#dcdcdc" stroke-width="2.8"/></svg>
<div class="t" style="left:1550px;top:624px;font-size:17px;color:#e6e6e6;">类型</div>
<svg class="ic" style="left:1628px;top:634px;" width="10" height="6" viewBox="0 0 10 6"><path d="M0.5 0.5 L5.0 5 L9.5 0.5" fill="none" stroke="#cfcfcf" stroke-width="1.2"/></svg>
<svg class="ic" style="left:1669px;top:624px;" width="18" height="16" viewBox="0 0 18 16"><rect x="1" y="1" width="16" height="14" fill="none" stroke="#dcdcdc" stroke-width="1.6"/><path d="M3 13 L7 7 L9.5 10 L12 6 L15 13 Z" fill="#dcdcdc"/></svg>
<div class="a" style="left:1510px;top:652px;width:410px;height:2px;background:#444444;"></div>
<div class="a" style="left:1695px;top:581px;width:181px;height:71px;background:#f8f8f8;border-radius:9px;box-shadow:0 0 2px #999"></div>
<div class="t" style="left:1711px;top:603px;font-size:27px;color:#222;font-family:'Liberation Serif',serif;font-weight:bold">英</div>
<svg class="ic" style="left:1748px;top:606px;" width="110" height="24" viewBox="0 0 110 24"><circle cx="5" cy="5" r="3.2" fill="#2a2a2a"/><path d="M14 9 Q16 10 15 14 Q14 17 12 18" fill="none" stroke="#2a2a2a" stroke-width="2.6"/><path d="M30 3 A9 9 0 1 1 27 19 A7.5 7.5 0 0 0 30 3 Z" fill="#2a2a2a"/><g transform="translate(66 12)"><circle r="7" fill="none" stroke="#2a2a2a" stroke-width="4"/><g stroke="#2a2a2a" stroke-width="3.5"><path d="M0 -11 V11 M-11 0 H11 M-8 -8 L8 8 M-8 8 L8 -8"/></g><circle r="2.6" fill="#f8f8f8"/></g><path d="M88 4 L94 2 Q97 5 100 2 L106 4 L109 9 L105 11 V20 H95 V11 L91 9 Z" fill="#2a2a2a"/></svg>
<div class="a" style="left:1515px;top:662px;width:176px;height:30px;background:#474747;border:1px solid #3c3c3c;border-radius:3px"></div>
<div class="t" style="left:1530px;top:668px;font-size:17px;color:#ececec;">正常</div>
<svg class="ic" style="left:1676px;top:678px;" width="10" height="6" viewBox="0 0 10 6"><path d="M0.5 0.5 L5.0 5 L9.5 0.5" fill="none" stroke="#cfcfcf" stroke-width="1.2"/></svg>
<div class="t" style="left:1702px;top:667px;font-size:17px;color:#cfcfcf;">不透明度:</div>
<div class="a" style="left:1787px;top:662px;width:80px;height:30px;background:#474747;border:1px solid #3c3c3c;border-radius:3px"></div>
<div class="a" style="left:1845px;top:663px;width:1px;height:28px;background:#3c3c3c;"></div>
<div class="t" style="left:1791px;top:668px;font-size:17px;color:#ececec;">100%</div>
<svg class="ic" style="left:1852px;top:678px;" width="10" height="6" viewBox="0 0 10 6"><path d="M0.5 0.5 L5.0 5 L9.5 0.5" fill="none" stroke="#cfcfcf" stroke-width="1.2"/></svg>
<div class="a" style="left:1510px;top:695px;width:410px;height:2px;background:#444444;"></div>
<div class="t" style="left:1520px;top:710px;font-size:17px;color:#cfcfcf;">锁定:</div>
<svg class="ic" style="left:1577px;top:710px;" width="17" height="17" viewBox="0 0 17 17"><rect x="0.8" y="0.8" width="15.4" height="15.4" fill="none" stroke="#dcdcdc" stroke-width="1.6"/><rect x="3" y="3" width="4" height="4" fill="#dcdcdc"/><rect x="10" y="3" width="4" height="4" fill="#dcdcdc"/><rect x="6.5" y="6.5" width="4" height="4" fill="#dcdcdc"/><rect x="3" y="10" width="4" height="4" fill="#dcdcdc"/><rect x="10" y="10" width="4" height="4" fill="#dcdcdc"/></svg>
<svg class="ic" style="left:1609px;top:709px;" width="20" height="20" viewBox="0 0 20 20"><path d="M19 0 C17 4 13 9 9 12 L7 10 C10 6 15 2 19 0 Z M7 13 C6 17 3 19 0 19 C2 17 2 14 5 11 Z" fill="#dcdcdc"/></svg>
<svg class="ic" style="left:1641px;top:709px;" width="20" height="20" viewBox="0 0 20 20"><path d="M10 0 L14 4 H11 V9 H16 V6 L20 10 L16 14 V11 H11 V16 H14 L10 20 L6 16 H9 V11 H4 V14 L0 10 L4 6 V9 H9 V4 H6 Z" fill="#dcdcdc"/></svg>
<svg class="ic" style="left:1674px;top:709px;" width="22" height="20" viewBox="0 0 22 20"><path d="M5 1 V19 M1 5 H19 M17 1 V19 M1 15 H21" stroke="#dcdcdc" stroke-width="1.6" stroke-dasharray="3 1.5"/><rect x="5" y="5" width="12" height="10" fill="none" stroke="#dcdcdc" stroke-width="1.6"/></svg>
<svg class="ic" style="left:1709px;top:708px;" width="16" height="20" viewBox="0 0 16 20"><path d="M3.5 9 V6 A4.5 4.5 0 0 1 12.5 6 V9" fill="none" stroke="#dcdcdc" stroke-width="2.2"/><rect x="1" y="9" width="14" height="11" rx="1" fill="#dcdcdc"/><circle cx="8" cy="14.5" r="1.8" fill="#535353"/></svg>
<div class="t" style="left:1739px;top:710px;font-size:17px;color:#cfcfcf;">填充:</div>
<div class="a" style="left:1787px;top:705px;width:80px;height:27px;background:#474747;border:1px solid #3c3c3c;border-radius:3px"></div>
<div class="a" style="left:1845px;top:706px;width:1px;height:25px;background:#3c3c3c;"></div>
<div class="t" style="left:1791px;top:710px;font-size:17px;color:#ececec;">100%</div>
<svg class="ic" style="left:1852px;top:720px;" width="10" height="6" viewBox="0 0 10 6"><path d="M0.5 0.5 L5.0 5 L9.5 0.5" fill="none" stroke="#cfcfcf" stroke-width="1.2"/></svg>
<div class="a" style="left:1510px;top:744px;width:384px;height:227px;background:#535353;"></div>
<div class="a" style="left:1510px;top:794px;width:384px;height:1px;background:#444444;"></div>
<div class="a" style="left:1554px;top:744px;width:1px;height:50px;background:#4a4a4a;"></div>
<svg class="ic" style="left:1522px;top:763px;" width="24" height="16" viewBox="0 0 24 16"><path d="M1 8 Q12 -3 23 8 Q12 19 1 8 Z" fill="#dcdcdc"/><circle cx="12" cy="8" r="4.5" fill="#535353"/><circle cx="12" cy="8" r="2.5" fill="#dcdcdc"/></svg>
<div class="a" style="left:1561px;top:751px;width:48px;height:37px;border:1px solid #333;background:#5a5a5a"></div>
<div class="a" style="left:1568px;top:757px;width:35px;height:26px;background-color:#fff;background-image:linear-gradient(45deg,#ddd 25%,transparent 25%,transparent 75%,#ddd 75%),linear-gradient(45deg,#ddd 25%,transparent 25%,transparent 75%,#ddd 75%);background-size:8px 8px;background-position:0 0,4px 4px"></div>
<div class="t" style="left:1625px;top:763px;font-size:17px;color:#e8e8e8;">图层 6</div>
<div class="a" style="left:1510px;top:845px;width:384px;height:1px;background:#444444;"></div>
<div class="a" style="left:1554px;top:795px;width:1px;height:50px;background:#4a4a4a;"></div>
<svg class="ic" style="left:1522px;top:814px;" width="24" height="16" viewBox="0 0 24 16"><path d="M1 8 Q12 -3 23 8 Q12 19 1 8 Z" fill="#dcdcdc"/><circle cx="12" cy="8" r="4.5" fill="#535353"/><circle cx="12" cy="8" r="2.5" fill="#dcdcdc"/></svg>
<div class="a" style="left:1561px;top:802px;width:48px;height:37px;border:1px solid #333;background:#5a5a5a"></div>
<div class="a" style="left:1568px;top:808px;width:35px;height:26px;background-color:#fff;background-image:linear-gradient(45deg,#ddd 25%,transparent 25%,transparent 75%,#ddd 75%),linear-gradient(45deg,#ddd 25%,transparent 25%,transparent 75%,#ddd 75%);background-size:8px 8px;background-position:0 0,4px 4px"></div>
<div class="t" style="left:1625px;top:814px;font-size:17px;color:#e8e8e8;">图层 4</div>
<svg class="ic" style="left:1855px;top:812px;" width="16" height="18" viewBox="0 0 16 18"><path d="M3.5 8 V5 A4.5 4.5 0 0 1 12.5 5 V8" fill="none" stroke="#dcdcdc" stroke-width="1.8"/><rect x="1" y="8" width="14" height="10" rx="1" fill="none" stroke="#dcdcdc" stroke-width="1.8"/><circle cx="8" cy="13" r="1.6" fill="#dcdcdc"/></svg>
<div class="a" style="left:1510px;top:896px;width:384px;height:1px;background:#444444;"></div>
<div class="a" style="left:1554px;top:846px;width:1px;height:50px;background:#4a4a4a;"></div>
<svg class="ic" style="left:1522px;top:865px;" width="24" height="16" viewBox="0 0 24 16"><path d="M1 8 Q12 -3 23 8 Q12 19 1 8 Z" fill="#dcdcdc"/><circle cx="12" cy="8" r="4.5" fill="#535353"/><circle cx="12" cy="8" r="2.5" fill="#dcdcdc"/></svg>
<div class="a" style="left:1561px;top:853px;width:48px;height:37px;border:1px solid #333;background:#5a5a5a"></div>
<div class="a" style="left:1568px;top:859px;width:35px;height:26px;background-color:#fff;background-image:linear-gradient(45deg,#ddd 25%,transparent 25%,transparent 75%,#ddd 75%),linear-gradient(45deg,#ddd 25%,transparent 25%,transparent 75%,#ddd 75%);background-size:8px 8px;background-position:0 0,4px 4px"></div>
<div class="t" style="left:1625px;top:865px;font-size:17px;color:#e8e8e8;">图层 2</div>
<svg class="ic" style="left:1855px;top:863px;" width="16" height="18" viewBox="0 0 16 18"><path d="M3.5 8 V5 A4.5 4.5 0 0 1 12.5 5 V8" fill="none" stroke="#dcdcdc" stroke-width="1.8"/><rect x="1" y="8" width="14" height="10" rx="1" fill="none" stroke="#dcdcdc" stroke-width="1.8"/><circle cx="8" cy="13" r="1.6" fill="#dcdcdc"/></svg>
<div class="a" style="left:1555px;top:897px;width:339px;height:50px;background:#696969;"></div>
<div class="a" style="left:1510px;top:947px;width:384px;height:1px;background:#444444;"></div>
<div class="a" style="left:1554px;top:897px;width:1px;height:50px;background:#4a4a4a;"></div>
<svg class="ic" style="left:1522px;top:916px;" width="24" height="16" viewBox="0 0 24 16"><path d="M1 8 Q12 -3 23 8 Q12 19 1 8 Z" fill="#dcdcdc"/><circle cx="12" cy="8" r="4.5" fill="#535353"/><circle cx="12" cy="8" r="2.5" fill="#dcdcdc"/></svg>
<div class="a" style="left:1561px;top:904px;width:48px;height:37px;border:1px solid #333;background:#5a5a5a"></div>
<svg class="ic" style="left:1569px;top:909px" width="34" height="26" viewBox="222 170 1039 779" preserveAspectRatio="none"><rect x="222" y="170" width="1039" height="779" fill="#feedd5"/><use href="#fills"/></svg>
<div class="a" style="left:1558px;top:901px;width:19px;height:2px;background:#f0f0f0;"></div>
<div class="a" style="left:1558px;top:901px;width:2px;height:15px;background:#f0f0f0;"></div>
<div class="a" style="left:1596px;top:901px;width:16px;height:2px;background:#f0f0f0;"></div>
<div class="a" style="left:1610px;top:901px;width:2px;height:15px;background:#f0f0f0;"></div>
<div class="a" style="left:1558px;top:942px;width:19px;height:2px;background:#f0f0f0;"></div>
<div class="a" style="left:1558px;top:930px;width:2px;height:14px;background:#f0f0f0;"></div>
<div class="a" style="left:1596px;top:942px;width:16px;height:2px;background:#f0f0f0;"></div>
<div class="a" style="left:1610px;top:930px;width:2px;height:14px;background:#f0f0f0;"></div>
<div class="t" style="left:1625px;top:916px;font-size:17px;color:#e8e8e8;">图层 5</div>
<div class="a" style="left:1554px;top:948px;width:1px;height:23px;background:#4a4a4a;"></div>
<div class="a" style="left:1561px;top:955px;width:48px;height:16px;border:1px solid #333;border-bottom:none;background:#5a5a5a"></div>
<div class="a" style="left:1568px;top:961px;width:35px;height:10px;background:#c9bcae;"></div>
<div class="a" style="left:1524px;top:965px;width:18px;height:6px;background:#535353;border:1px solid #3e3e3e;border-bottom:none"></div>
<svg class="ic" style="left:1625px;top:964px;" width="60" height="8" viewBox="0 0 60 8"><path d="M1 8 V1 H14 V8 M19 1 H33 V5 M40 8 V3" fill="none" stroke="#d8d8d8" stroke-width="1.6"/></svg>
<div class="a" style="left:1894px;top:744px;width:24px;height:227px;background:#4a4a4a;"></div>
<div class="a" style="left:1897px;top:769px;width:18px;height:131px;background:#5f5f5f;border-radius:3px"></div>
<svg class="ic" style="left:1900px;top:756px;" width="12" height="7" viewBox="0 0 12 7"><path d="M1 6 L6 1 L11 6" fill="none" stroke="#aaa" stroke-width="1.2"/></svg>
<svg class="ic" style="left:1900px;top:952px;" width="12" height="7" viewBox="0 0 12 7"><path d="M1 1 L6 6 L11 1" fill="none" stroke="#aaa" stroke-width="1.2"/></svg>
<div class="a" style="left:1510px;top:971px;width:410px;height:2px;background:#3e3e3e;"></div>
<div class="a" style="left:1510px;top:973px;width:410px;height:34px;background:#535353;"></div>
<svg class="ic" style="left:1612px;top:982px;" width="23" height="14" viewBox="0 0 23 14"><path d="M8 2 H5 A5 5 0 0 0 5 12 H8 M15 2 H18 A5 5 0 0 1 18 12 H15 M6 7 H17" fill="none" stroke="#9a9a9a" stroke-width="2.4"/></svg>
<div class="t" style="left:1655px;top:978px;font-size:22px;font-style:italic;color:#dcdcdc;font-family:'Liberation Serif',serif">fx</div>
<svg class="ic" style="left:1672px;top:998px;" width="8" height="4" viewBox="0 0 8 4"><path d="M0 0 H8 L4 4 Z" fill="#dcdcdc"/></svg>
<svg class="ic" style="left:1696px;top:982px;" width="20" height="16" viewBox="0 0 20 16"><rect x="0" y="0" width="20" height="16" rx="2" fill="#dcdcdc"/><circle cx="10" cy="8" r="4.5" fill="#535353"/></svg>
<svg class="ic" style="left:1737px;top:981px;" width="24" height="20" viewBox="0 0 24 20"><circle cx="9" cy="9" r="8" fill="none" stroke="#dcdcdc" stroke-width="1.8"/><path d="M3.3 14.7 A8 8 0 0 1 14.7 3.3 Z" fill="#dcdcdc"/><path d="M14 17 H22 L18 20 Z" fill="#dcdcdc"/></svg>
<svg class="ic" style="left:1776px;top:981px;" width="19" height="17" viewBox="0 0 19 17"><path d="M0 3 V17 H19 V4 H8 L6 1 H1 Z" fill="#dcdcdc"/><path d="M0 4.5 H19" stroke="#535353" stroke-width="1"/></svg>
<svg class="ic" style="left:1818px;top:981px;" width="17" height="18" viewBox="0 0 17 18"><rect x="1" y="1" width="15" height="16" fill="none" stroke="#dcdcdc" stroke-width="1.6"/><path d="M8.5 5 V13 M4.5 9 H12.5" stroke="#dcdcdc" stroke-width="2"/></svg>
<svg class="ic" style="left:1859px;top:980px;" width="17" height="20" viewBox="0 0 17 20"><path d="M1 3 H16 M6 3 V1 H11 V3" fill="none" stroke="#dcdcdc" stroke-width="1.6"/><path d="M3 5 H14 L13 19 H4 Z" fill="none" stroke="#dcdcdc" stroke-width="1.6"/><path d="M6.5 7 V17 M8.5 7 V17 M10.5 7 V17" stroke="#dcdcdc" stroke-width="1.2"/></svg>
<div class="a" style="left:0px;top:1007px;width:1920px;height:1px;background:#44505c;"></div>
<div class="a" style="left:0px;top:1008px;width:1920px;height:11px;background:#1d2a36;"></div>
<div class="a" style="left:1230px;top:1014px;width:60px;height:5px;background:#3a4450;border-radius:5px 5px 0 0"></div>
<div class="a" style="left:1297px;top:1013px;width:60px;height:6px;background:#8b4a52;border-radius:6px 6px 0 0"></div>
<div class="a" style="left:48px;top:1014px;width:16px;height:5px;background:#b33a3a;border-radius:5px 5px 0 0"></div>
</body></html>
